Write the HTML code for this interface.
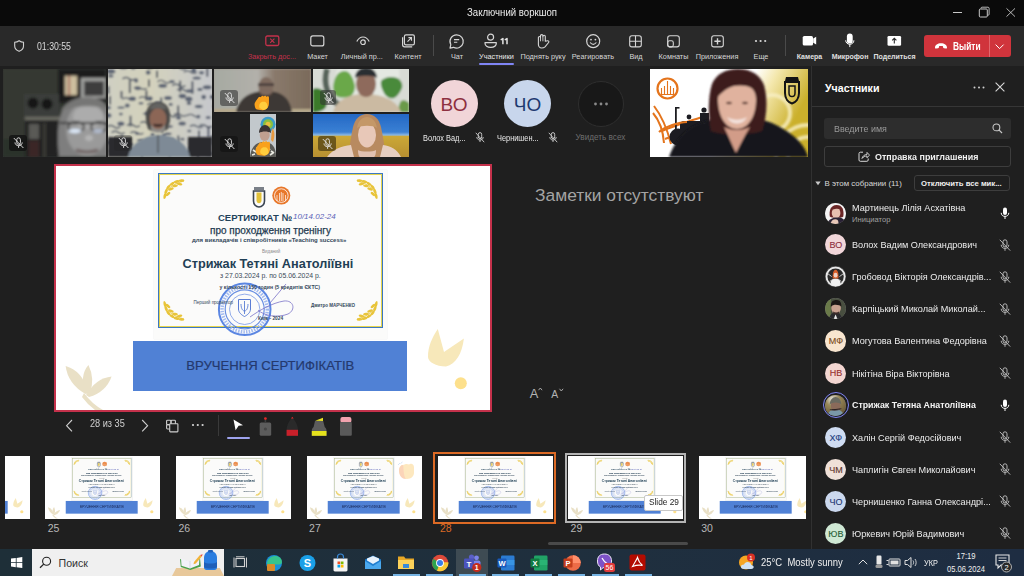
<!DOCTYPE html>
<html><head><meta charset="utf-8">
<style>
*{margin:0;padding:0;box-sizing:border-box}
html,body{width:1024px;height:576px;overflow:hidden;background:#1f1f1f;font-family:"Liberation Sans",sans-serif;color:#fff}
.a{position:absolute}
.t{position:absolute;white-space:nowrap;line-height:1}
.lbl{position:absolute;white-space:nowrap;line-height:1;font-size:7.3px;color:#d6d6d6;transform:translateX(-50%)}
svg{position:absolute;overflow:visible}
</style></head><body>
<!-- title bar -->
<div class="a" style="left:0;top:0;width:1024px;height:26px;background:#0a0a0a"></div>
<div class="t" style="left:467px;top:7.2px;font-size:10.7px;color:#ececec;transform-origin:0 0;transform:scaleX(0.9)">Заключний воркшоп</div>
<!-- window controls -->
<div class="a" style="left:953px;top:11.5px;width:8.7px;height:1px;background:#c8c8c8"></div>
<svg style="left:978px;top:6px" width="13" height="13"><path d="M3 2.6V2.2C3 1.6 3.5 1.2 4.1 1.2H10c0.6 0 1.1 0.5 1.1 1.1V8.2c0 0.6-0.4 1.1-1 1.1H9.6" fill="none" stroke="#c8c8c8" stroke-width="0.9"/><rect x="1.3" y="3" width="8" height="8" rx="1" fill="none" stroke="#c8c8c8" stroke-width="1"/></svg>
<svg style="left:1006px;top:8px" width="10" height="10"><path d="M0.5 0.4L9 8.6M9 0.4L0.5 8.6" stroke="#c8c8c8" stroke-width="0.9"/></svg>

<!-- toolbar -->
<div class="a" style="left:0;top:26px;width:1024px;height:40px;background:#292929"></div>

<!-- shield + time -->
<svg style="left:13.7px;top:40.2px" width="11" height="12"><path d="M5.1 0.7C3.7 1.7 2.3 2.2 0.7 2.3V5.9C0.7 8.4 2.3 10.2 5.1 11.3C7.9 10.2 9.5 8.4 9.5 5.9V2.3C7.9 2.2 6.5 1.7 5.1 0.7z" fill="none" stroke="#cfcfcf" stroke-width="1.1"/></svg>
<div class="t" style="left:37px;top:41.8px;font-size:10.4px;color:#d8d8d8;transform-origin:0 0;transform:scaleX(0.84)">01:30:55</div>

<!-- close share -->
<svg style="left:265px;top:35px" width="15" height="12"><rect x="0.8" y="1" width="13" height="9.5" rx="1.5" fill="none" stroke="#c4314b" stroke-width="1.3"/><path d="M5.2 3.7L9.4 7.9M9.4 3.7L5.2 7.9" stroke="#c4314b" stroke-width="1.1"/></svg>
<div class="lbl" style="left:272px;top:53px;color:#c4314b">Закрыть дос...</div>
<!-- layout -->
<svg style="left:310px;top:35px" width="15" height="12"><rect x="0.8" y="0.9" width="13" height="10" rx="2" fill="none" stroke="#d6d6d6" stroke-width="1.2"/></svg>
<div class="lbl" style="left:317.5px;top:53px">Макет</div>
<!-- personal view -->
<svg style="left:356px;top:36px" width="14" height="10"><path d="M0.8 5.5C2.5 2.3 4.6 1 7 1s4.5 1.3 6.2 4.5" fill="none" stroke="#d6d6d6" stroke-width="1.2"/><circle cx="7" cy="6.2" r="2.3" fill="none" stroke="#d6d6d6" stroke-width="1.2"/></svg>
<div class="lbl" style="left:361.8px;top:53px">Личный пр...</div>
<!-- content -->
<svg style="left:401px;top:34px" width="15" height="14"><rect x="3.4" y="0.8" width="10" height="10" rx="1.6" fill="none" stroke="#d6d6d6" stroke-width="1.2"/><path d="M1.6 3.2v7.6c0 1.2 0.9 2 2 2h7.6" fill="none" stroke="#d6d6d6" stroke-width="1.2"/><path d="M6.5 7.6L10.3 3.8M7.4 3.6h3.1v3.1" fill="none" stroke="#d6d6d6" stroke-width="1.1"/></svg>
<div class="lbl" style="left:408px;top:53px">Контент</div>
<div class="a" style="left:433px;top:35px;width:1px;height:21px;background:#4a4a4a"></div>
<!-- chat -->
<svg style="left:449px;top:34px" width="16" height="15"><path d="M7.6 0.9a6.6 6.6 0 1 1-3.1 12.4L1 14.1l0.8-3.4A6.6 6.6 0 0 1 7.6 0.9z" fill="none" stroke="#d6d6d6" stroke-width="1.2" stroke-linejoin="round"/><path d="M5 5.6h5.2M5 8.3h3.3" stroke="#d6d6d6" stroke-width="1.1"/></svg>
<div class="lbl" style="left:457px;top:53px">Чат</div>
<!-- participants -->
<svg style="left:484px;top:33px" width="14" height="16"><circle cx="6.6" cy="4.2" r="3" fill="none" stroke="#d6d6d6" stroke-width="1.2"/><path d="M1 9.6h11.3v0.6c0 2.6-2.4 4.2-5.65 4.2S1 12.8 1 10.2z" fill="none" stroke="#d6d6d6" stroke-width="1.2" stroke-linejoin="round"/></svg>
<svg style="left:499.5px;top:37.8px" width="9" height="7"><path d="M2.9 6.2V0.6L0.7 1.9M7 6.2V0.6L4.8 1.9" fill="none" stroke="#e4e4e4" stroke-width="1.5" stroke-linejoin="round"/></svg>
<div class="lbl" style="left:496.5px;top:53px;color:#e8e8e8">Участники</div>
<div class="a" style="left:479px;top:63px;width:35px;height:2px;background:#7f85f5;border-radius:1px"></div>
<!-- raise hand -->
<svg style="left:537px;top:33px" width="14" height="16"><path d="M1.4 11V4.6A1.05 1.05 0 0 1 3.5 4.6V2.8A1.2 1.2 0 0 1 5.9 2.8V3.5A1.2 1.2 0 0 1 8.3 3.5V8.3L10.5 7.8C11.6 7.6 12.3 8.7 11.6 9.5L8 13.8C7.1 14.7 5.8 15 4.6 15C2.7 15 1.4 13.5 1.4 11.5Z" fill="none" stroke="#d6d6d6" stroke-width="1.1" stroke-linejoin="round"/><path d="M3.5 4.6V8.3M5.9 3.5V8.3" stroke="#d6d6d6" stroke-width="0.9"/></svg>
<div class="lbl" style="left:543px;top:53px">Поднять руку</div>
<!-- react -->
<svg style="left:586px;top:34px" width="15" height="15"><circle cx="7.2" cy="7.2" r="6.5" fill="none" stroke="#d6d6d6" stroke-width="1.2"/><circle cx="5" cy="5.6" r="0.9" fill="#d6d6d6"/><circle cx="9.4" cy="5.6" r="0.9" fill="#d6d6d6"/><path d="M4.4 8.8c0.8 1.1 1.7 1.6 2.8 1.6s2-0.5 2.8-1.6" fill="none" stroke="#d6d6d6" stroke-width="1.1" stroke-linecap="round"/></svg>
<div class="lbl" style="left:593px;top:53px">Реагировать</div>
<!-- view -->
<svg style="left:629.4px;top:34.5px" width="14" height="13"><rect x="0.7" y="0.7" width="11.6" height="11.2" rx="2.2" fill="none" stroke="#d6d6d6" stroke-width="1.1"/><path d="M6.5 0.7v11.2M0.7 6.3h11.6" stroke="#d6d6d6" stroke-width="1.1"/></svg>
<div class="lbl" style="left:636px;top:53px">Вид</div>
<!-- rooms -->
<svg style="left:666.6px;top:34.5px" width="14" height="13"><rect x="0.7" y="0.7" width="11.6" height="11.2" rx="2.3" fill="none" stroke="#d6d6d6" stroke-width="1.1"/><rect x="0.7" y="5.7" width="5.6" height="6.2" rx="1.9" fill="none" stroke="#d6d6d6" stroke-width="1.1"/></svg>
<div class="lbl" style="left:673.5px;top:53px">Комнаты</div>
<!-- apps -->
<svg style="left:710.5px;top:34.5px" width="14" height="13"><rect x="0.7" y="0.7" width="11.6" height="11.2" rx="2.2" fill="none" stroke="#d6d6d6" stroke-width="1.1"/><path d="M6.5 3.2v6.2M3.4 6.3h6.2" stroke="#d6d6d6" stroke-width="1.4"/></svg>
<div class="lbl" style="left:717px;top:53px">Приложения</div>
<!-- more -->
<svg style="left:754px;top:39px" width="14" height="4"><circle cx="2" cy="2" r="1.1" fill="#d6d6d6"/><circle cx="6.6" cy="2" r="1.1" fill="#d6d6d6"/><circle cx="11.2" cy="2" r="1.1" fill="#d6d6d6"/></svg>
<div class="lbl" style="left:761px;top:53px">Еще</div>
<div class="a" style="left:785px;top:35px;width:1px;height:21px;background:#4a4a4a"></div>
<!-- camera -->
<svg style="left:802px;top:35px" width="15" height="11"><rect x="0.7" y="0.9" width="10.3" height="9.6" rx="1.6" fill="#fff"/><path d="M11.2 3.6L14.2 1.8v7.8l-3-1.8z" fill="#fff"/></svg>
<div class="lbl" style="left:809.5px;top:53px;font-weight:bold;font-size:7px;color:#e0e0e0">Камера</div>
<!-- mic -->
<svg style="left:845px;top:33px" width="10" height="15"><rect x="1.9" y="0.6" width="5.8" height="10" rx="2.9" fill="#fff"/><path d="M0.7 7.3c0 2.3 1.8 4 4.1 4s4.1-1.7 4.1-4M4.8 11.3v2.8" fill="none" stroke="#fff" stroke-width="1"/></svg>
<div class="lbl" style="left:850px;top:53px;font-weight:bold;font-size:7px;color:#e0e0e0">Микрофон</div>
<!-- share -->
<svg style="left:887px;top:35px" width="15" height="12"><rect x="0.5" y="0.9" width="13.6" height="9.9" rx="1.3" fill="#fff"/><path d="M7.3 8.6V3.4M5.2 5.4l2.1-2.1 2.1 2.1" fill="none" stroke="#292929" stroke-width="1.1"/></svg>
<div class="lbl" style="left:894.5px;top:53px;font-weight:bold;font-size:7px;color:#e0e0e0">Поделиться</div>
<!-- leave -->
<div class="a" style="left:924px;top:35px;width:87px;height:22px;background:#d0343c;border-radius:3px"></div>
<div class="a" style="left:989px;top:35px;width:1px;height:22px;background:#e0676d"></div>
<svg style="left:934px;top:42px" width="14" height="8"><path d="M1 5.4C1.1 3.1 3.6 1.2 7 1.2s5.9 1.9 6 4.2c0 0.8-0.5 1.3-1.1 1.2l-2-0.3c-0.6-0.1-0.9-0.6-0.9-1.2V4.2C8.3 3.8 5.7 3.8 5 4.2v0.9c0 0.6-0.3 1.1-0.9 1.2l-2 0.3C1.5 6.7 1 6.2 1 5.4z" fill="#fff"/></svg>
<div class="t" style="left:952.5px;top:42px;font-size:10.2px;font-weight:bold;color:#fff;transform-origin:0 0;transform:scaleX(0.82)">Выйти</div>
<svg style="left:995px;top:44px" width="10" height="6"><path d="M0.6 0.6L4.6 4.6 8.6 0.6" fill="none" stroke="#fff" stroke-width="1"/></svg>


<!-- VIDEO TILES -->
<svg style="left:0;top:0" width="1" height="1"><defs>
<filter id="b1" x="-20%" y="-20%" width="140%" height="140%"><feGaussianBlur stdDeviation="1.2"/></filter>
<filter id="b2" x="-20%" y="-20%" width="140%" height="140%"><feGaussianBlur stdDeviation="2.5"/></filter>
<filter id="b15" x="-20%" y="-20%" width="140%" height="140%"><feGaussianBlur stdDeviation="1.6"/></filter>
<filter id="b05" x="-20%" y="-20%" width="140%" height="140%"><feGaussianBlur stdDeviation="0.6"/></filter>
</defs></svg>
<!-- tile 1 -->
<div class="a" style="left:3px;top:69px;width:103px;height:88px;overflow:hidden;background:#2e332f">
<svg style="left:0;top:0" width="103" height="88"><g filter="url(#b15)">
 <rect x="0" y="0" width="103" height="88" fill="#2c312c"/>
 <rect x="0" y="0" width="58" height="70" fill="#343933"/>
 <rect x="55" y="0" width="48" height="34" fill="#1c1d1b"/>
 <rect x="62" y="7" width="12" height="19" fill="#cdbf9f"/>
 <rect x="65" y="7" width="2" height="19" fill="#8a2a2a" opacity="0.6"/>
 <rect x="78" y="9" width="25" height="20" fill="#a2a3a0"/>
 <rect x="81" y="12" width="20" height="15" fill="#3c3e3c"/>
 <rect x="21" y="25" width="35" height="23" fill="#3a3c3a"/>
 <circle cx="30" cy="34" r="5.5" fill="#151615"/>
 <circle cx="44" cy="35" r="5.5" fill="#151615"/>
 <rect x="22" y="48" width="36" height="3" fill="#6e6e66"/>
 <rect x="22" y="51" width="36" height="37" fill="#242422"/>
 <rect x="26" y="55" width="10" height="15" fill="#5a5a56"/>
 <rect x="26" y="72" width="10" height="16" fill="#3a2826"/>
 <rect x="40" y="54" width="3" height="34" fill="#3a3a36"/>
 <path d="M56 88C54 70 54 52 60 40C66 31 74 28 84 28C96 28 104 34 106 42V88z" fill="#7e7e7e"/>
 <ellipse cx="84" cy="60" rx="21" ry="27" fill="#9a9a9a"/>
 <ellipse cx="85" cy="48" rx="15" ry="12" fill="#acacac"/>
 <path d="M58 42C62 33 72 29 84 29C95 29 102 34 105 40C96 36 70 36 58 42z" fill="#767674"/>
 <path d="M57 54h48" stroke="#2e2e2e" stroke-width="2.2"/>
 <ellipse cx="73" cy="58" rx="8" ry="5" fill="none" stroke="#333" stroke-width="1.8"/>
 <ellipse cx="96" cy="58" rx="8" ry="5" fill="none" stroke="#333" stroke-width="1.8"/>
 <ellipse cx="72" cy="62" rx="6.5" ry="2.2" fill="#dce8f8"/>
 <ellipse cx="95" cy="62" rx="5" ry="2" fill="#b0bacc"/>
 <ellipse cx="86" cy="69" rx="4" ry="3" fill="#b4b4b4"/>
 <path d="M73 81c6 2.5 16 2.5 22 0" stroke="#6e6262" stroke-width="3" fill="none"/>
</g></svg>
<div class="a" style="left:6px;top:66px;width:18px;height:16px;border-radius:3px;background:rgba(18,18,18,0.8)"></div><svg style="left:9.5px;top:68.0px" width="11" height="12"><rect x="3.8" y="0.8" width="3.6" height="6.6" rx="1.8" fill="none" stroke="#e8e8e8" stroke-width="0.9"/><path d="M2 5.4c0 2 1.6 3.3 3.6 3.3s3.6-1.3 3.6-3.3M5.6 8.7v2.2" fill="none" stroke="#e8e8e8" stroke-width="0.9"/><path d="M0.8 1L10.4 11" stroke="#e8e8e8" stroke-width="0.9"/></svg>
</div>
<!-- tile 2 -->
<div class="a" style="left:108px;top:69px;width:104px;height:88px;overflow:hidden;background:#c8c8c0">
<svg style="left:0;top:0" width="104" height="88"><defs><linearGradient id="wp" x1="0" y1="0" x2="1" y2="0"><stop offset="0" stop-color="#cfcfc2"/><stop offset="0.4" stop-color="#d4d2bc"/><stop offset="1" stop-color="#c6c8cc"/></linearGradient></defs>
<g filter="url(#b1)">
 <rect x="0" y="0" width="104" height="88" fill="url(#wp)"/>
<ellipse cx="3.0" cy="2.5" rx="4.4" ry="2.2" fill="#5a6272"/>
<ellipse cx="15.4" cy="-1.8" rx="4.4" ry="2.0" fill="#5a6272"/>
<ellipse cx="25.2" cy="-1.3" rx="2.6" ry="1.9" fill="#5a6272"/>
<path d="M32.6 -1.9c2 -1.5 5 -1.5 7 0s4 1.5 6 0" fill="none" stroke="#4a5262" stroke-width="1.4"/>
<ellipse cx="40.2" cy="3.5" rx="2.4" ry="2.2" fill="#5a6272"/>
<path d="M49.1 1.7v7.0" stroke="#3a4254" stroke-width="1.8"/>
<path d="M65.0 -0.7c2 -1.5 5 -1.5 7 0s4 1.5 6 0" fill="none" stroke="#4a5262" stroke-width="1.4"/>
<path d="M75.9 3.2c2 -1.5 5 -1.5 7 0s4 1.5 6 0" fill="none" stroke="#4a5262" stroke-width="1.4"/>
<ellipse cx="85.7" cy="1.2" rx="2.5" ry="2.4" fill="#5a6272"/>
<ellipse cx="93.5" cy="3.8" rx="2.7" ry="1.7" fill="#5a6272"/>
<path d="M99.3 -1.1v8.8" stroke="#3a4254" stroke-width="1.8"/>
<ellipse cx="2.8" cy="7.0" rx="2.8" ry="1.6" fill="#5a6272"/>
<path d="M14.5 9.9c2 -1.5 5 -1.5 7 0s4 1.5 6 0" fill="none" stroke="#4a5262" stroke-width="1.4"/>
<path d="M21.8 11.2v12.9" stroke="#3a4254" stroke-width="1.8"/>
<ellipse cx="28.2" cy="11.5" rx="2.0" ry="2.2" fill="#5a6272"/>
<path d="M40.9 10.5v7.3" stroke="#3a4254" stroke-width="1.8"/>
<path d="M49.4 12.7c2 -1.5 5 -1.5 7 0s4 1.5 6 0" fill="none" stroke="#4a5262" stroke-width="1.4"/>
<ellipse cx="64.0" cy="12.6" rx="2.9" ry="1.7" fill="#5a6272"/>
<path d="M72.2 11.7v11.5" stroke="#3a4254" stroke-width="1.8"/>
<path d="M84.4 12.2v12.7" stroke="#3a4254" stroke-width="1.8"/>
<ellipse cx="88.7" cy="9.0" rx="4.3" ry="1.6" fill="#5a6272"/>
<path d="M105.4 10.3c2 -1.5 5 -1.5 7 0s4 1.5 6 0" fill="none" stroke="#4a5262" stroke-width="1.4"/>
<path d="M0.5 17.1v7.9" stroke="#3a4254" stroke-width="1.8"/>
<path d="M13.5 22.0v7.3" stroke="#3a4254" stroke-width="1.8"/>
<path d="M25.9 19.2c2 -1.5 5 -1.5 7 0s4 1.5 6 0" fill="none" stroke="#4a5262" stroke-width="1.4"/>
<ellipse cx="29.9" cy="19.6" rx="3.1" ry="1.7" fill="#5a6272"/>
<path d="M38.4 21.5v10.0" stroke="#3a4254" stroke-width="1.8"/>
<ellipse cx="54.7" cy="16.8" rx="4.4" ry="2.0" fill="#5a6272"/>
<path d="M64.3 16.6c2 -1.5 5 -1.5 7 0s4 1.5 6 0" fill="none" stroke="#4a5262" stroke-width="1.4"/>
<path d="M69.2 21.1c2 -1.5 5 -1.5 7 0s4 1.5 6 0" fill="none" stroke="#4a5262" stroke-width="1.4"/>
<ellipse cx="81.6" cy="22.0" rx="4.4" ry="1.8" fill="#5a6272"/>
<ellipse cx="91.9" cy="20.4" rx="2.7" ry="1.7" fill="#5a6272"/>
<ellipse cx="99.2" cy="18.3" rx="4.4" ry="2.0" fill="#5a6272"/>
<path d="M2.0 27.0v8.6" stroke="#3a4254" stroke-width="1.8"/>
<path d="M14.3 30.2c2 -1.5 5 -1.5 7 0s4 1.5 6 0" fill="none" stroke="#4a5262" stroke-width="1.4"/>
<ellipse cx="24.3" cy="29.6" rx="3.7" ry="2.2" fill="#5a6272"/>
<path d="M30.9 29.2c2 -1.5 5 -1.5 7 0s4 1.5 6 0" fill="none" stroke="#4a5262" stroke-width="1.4"/>
<ellipse cx="41.9" cy="29.6" rx="2.7" ry="2.4" fill="#5a6272"/>
<path d="M53.2 28.5v10.3" stroke="#3a4254" stroke-width="1.8"/>
<ellipse cx="60.0" cy="29.0" rx="4.0" ry="2.0" fill="#5a6272"/>
<ellipse cx="74.4" cy="27.1" rx="3.8" ry="2.3" fill="#5a6272"/>
<ellipse cx="80.8" cy="30.1" rx="3.7" ry="2.5" fill="#5a6272"/>
<ellipse cx="95.7" cy="28.1" rx="2.4" ry="2.3" fill="#5a6272"/>
<ellipse cx="105.5" cy="27.9" rx="3.8" ry="2.1" fill="#5a6272"/>
<ellipse cx="-0.6" cy="38.7" rx="3.7" ry="1.7" fill="#5a6272"/>
<ellipse cx="13.0" cy="38.6" rx="3.8" ry="1.2" fill="#5a6272"/>
<ellipse cx="19.3" cy="36.6" rx="2.5" ry="2.1" fill="#5a6272"/>
<ellipse cx="33.0" cy="34.3" rx="2.6" ry="1.3" fill="#5a6272"/>
<path d="M39.1 35.9c2 -1.5 5 -1.5 7 0s4 1.5 6 0" fill="none" stroke="#4a5262" stroke-width="1.4"/>
<ellipse cx="49.5" cy="34.2" rx="3.0" ry="2.0" fill="#5a6272"/>
<ellipse cx="62.7" cy="35.4" rx="2.0" ry="1.7" fill="#5a6272"/>
<path d="M70.2 36.5v12.0" stroke="#3a4254" stroke-width="1.8"/>
<ellipse cx="81.0" cy="34.2" rx="2.2" ry="1.9" fill="#5a6272"/>
<ellipse cx="90.7" cy="37.5" rx="4.0" ry="1.7" fill="#5a6272"/>
<path d="M104.5 37.9c2 -1.5 5 -1.5 7 0s4 1.5 6 0" fill="none" stroke="#4a5262" stroke-width="1.4"/>
<ellipse cx="-0.9" cy="46.6" rx="4.4" ry="2.5" fill="#5a6272"/>
<ellipse cx="12.9" cy="45.1" rx="2.0" ry="1.3" fill="#5a6272"/>
<path d="M22.5 46.7v10.8" stroke="#3a4254" stroke-width="1.8"/>
<path d="M35.1 45.3c2 -1.5 5 -1.5 7 0s4 1.5 6 0" fill="none" stroke="#4a5262" stroke-width="1.4"/>
<ellipse cx="39.8" cy="44.7" rx="2.9" ry="2.4" fill="#5a6272"/>
<path d="M55.3 46.6c2 -1.5 5 -1.5 7 0s4 1.5 6 0" fill="none" stroke="#4a5262" stroke-width="1.4"/>
<path d="M65.8 46.0c2 -1.5 5 -1.5 7 0s4 1.5 6 0" fill="none" stroke="#4a5262" stroke-width="1.4"/>
<ellipse cx="70.6" cy="48.9" rx="2.7" ry="1.8" fill="#5a6272"/>
<path d="M79.0 46.7c2 -1.5 5 -1.5 7 0s4 1.5 6 0" fill="none" stroke="#4a5262" stroke-width="1.4"/>
<ellipse cx="90.3" cy="47.7" rx="2.0" ry="1.9" fill="#5a6272"/>
<ellipse cx="100.2" cy="48.6" rx="2.6" ry="1.5" fill="#5a6272"/>
<path d="M-0.8 57.9c2 -1.5 5 -1.5 7 0s4 1.5 6 0" fill="none" stroke="#4a5262" stroke-width="1.4"/>
<ellipse cx="12.9" cy="54.8" rx="3.5" ry="2.2" fill="#5a6272"/>
<path d="M18.9 56.6c2 -1.5 5 -1.5 7 0s4 1.5 6 0" fill="none" stroke="#4a5262" stroke-width="1.4"/>
<path d="M32.3 54.0c2 -1.5 5 -1.5 7 0s4 1.5 6 0" fill="none" stroke="#4a5262" stroke-width="1.4"/>
<path d="M42.2 54.8c2 -1.5 5 -1.5 7 0s4 1.5 6 0" fill="none" stroke="#4a5262" stroke-width="1.4"/>
<path d="M54.0 55.5v8.5" stroke="#3a4254" stroke-width="1.8"/>
<ellipse cx="61.6" cy="57.5" rx="3.4" ry="1.2" fill="#5a6272"/>
<ellipse cx="74.2" cy="54.6" rx="3.8" ry="2.0" fill="#5a6272"/>
<path d="M81.9 57.5c2 -1.5 5 -1.5 7 0s4 1.5 6 0" fill="none" stroke="#4a5262" stroke-width="1.4"/>
<path d="M91.1 57.1c2 -1.5 5 -1.5 7 0s4 1.5 6 0" fill="none" stroke="#4a5262" stroke-width="1.4"/>
<path d="M100.4 57.0v12.0" stroke="#3a4254" stroke-width="1.8"/>
<path d="M3.6 63.6c2 -1.5 5 -1.5 7 0s4 1.5 6 0" fill="none" stroke="#4a5262" stroke-width="1.4"/>
<path d="M14.2 66.5v9.9" stroke="#3a4254" stroke-width="1.8"/>
<path d="M22.4 64.0c2 -1.5 5 -1.5 7 0s4 1.5 6 0" fill="none" stroke="#4a5262" stroke-width="1.4"/>
<ellipse cx="29.2" cy="64.5" rx="2.2" ry="1.5" fill="#5a6272"/>
<ellipse cx="44.6" cy="65.8" rx="2.1" ry="2.1" fill="#5a6272"/>
<ellipse cx="55.8" cy="67.0" rx="2.1" ry="2.3" fill="#5a6272"/>
<ellipse cx="59.8" cy="64.9" rx="3.8" ry="1.4" fill="#5a6272"/>
<path d="M70.3 66.5v10.7" stroke="#3a4254" stroke-width="1.8"/>
<ellipse cx="81.3" cy="62.0" rx="2.1" ry="1.3" fill="#5a6272"/>
<path d="M91.0 61.4v10.5" stroke="#3a4254" stroke-width="1.8"/>
<path d="M103.9 66.3v9.6" stroke="#3a4254" stroke-width="1.8"/>
<ellipse cx="0.5" cy="73.6" rx="4.3" ry="1.7" fill="#5a6272"/>
<path d="M8.4 74.2v10.8" stroke="#3a4254" stroke-width="1.8"/>
<ellipse cx="22.0" cy="75.5" rx="3.6" ry="1.5" fill="#5a6272"/>
<ellipse cx="32.4" cy="71.5" rx="3.3" ry="1.4" fill="#5a6272"/>
<ellipse cx="39.9" cy="72.2" rx="2.4" ry="2.1" fill="#5a6272"/>
<ellipse cx="53.2" cy="70.5" rx="2.2" ry="1.4" fill="#5a6272"/>
<ellipse cx="62.8" cy="71.4" rx="3.2" ry="1.6" fill="#5a6272"/>
<ellipse cx="74.4" cy="70.2" rx="2.1" ry="1.4" fill="#5a6272"/>
<path d="M85.6 74.1c2 -1.5 5 -1.5 7 0s4 1.5 6 0" fill="none" stroke="#4a5262" stroke-width="1.4"/>
<ellipse cx="88.9" cy="75.8" rx="4.1" ry="1.4" fill="#5a6272"/>
<path d="M103.0 72.1c2 -1.5 5 -1.5 7 0s4 1.5 6 0" fill="none" stroke="#4a5262" stroke-width="1.4"/>
<path d="M0.7 82.7c2 -1.5 5 -1.5 7 0s4 1.5 6 0" fill="none" stroke="#4a5262" stroke-width="1.4"/>
<ellipse cx="11.1" cy="79.8" rx="3.6" ry="2.2" fill="#5a6272"/>
<ellipse cx="21.5" cy="84.1" rx="3.5" ry="1.9" fill="#5a6272"/>
<path d="M33.9 81.4v7.2" stroke="#3a4254" stroke-width="1.8"/>
<ellipse cx="39.6" cy="79.2" rx="3.2" ry="2.2" fill="#5a6272"/>
<ellipse cx="48.0" cy="81.8" rx="3.5" ry="1.8" fill="#5a6272"/>
<path d="M61.7 79.6v8.0" stroke="#3a4254" stroke-width="1.8"/>
<ellipse cx="71.0" cy="81.3" rx="2.4" ry="1.5" fill="#5a6272"/>
<path d="M80.2 80.0c2 -1.5 5 -1.5 7 0s4 1.5 6 0" fill="none" stroke="#4a5262" stroke-width="1.4"/>
<path d="M89.9 81.9v12.5" stroke="#3a4254" stroke-width="1.8"/>
<ellipse cx="101.0" cy="84.6" rx="3.7" ry="1.8" fill="#5a6272"/>
</g><g filter="url(#b1)">
 <path d="M0 68h24v20H0zM80 68h24v20H80z" fill="#2c2c2e"/>
 <path d="M20 88c2-12 14-21 30-22s30 9 32 22z" fill="#7e8a96"/>
 <path d="M38 52c-1-12 3-19 12-19s13 7 12 19l-2 8c-5 4-15 4-20 0z" fill="#4a4846"/>
 <ellipse cx="50" cy="50" rx="8.5" ry="11" fill="#8c6656"/>
 <path d="M43 55c2 7 12 7 14 0v5c-3 5-11 5-14 0z" fill="#8e8c88"/>
 <path d="M45.5 55.5c2.5 1.5 6.5 1.5 9 0" stroke="#2e2424" stroke-width="2"/>
 <path d="M41 41c2-5 5-7 9-7s7 2 9 7c-4-2-14-2-18 0z" fill="#646462"/>
 <path d="M50 66v18" stroke="#3a3a3a" stroke-width="1"/>
</g></svg>
<div class="a" style="left:6px;top:66px;width:18px;height:16px;border-radius:3px;background:rgba(30,30,30,0.25)"></div><svg style="left:9.5px;top:68.0px" width="11" height="12"><rect x="3.8" y="0.8" width="3.6" height="6.6" rx="1.8" fill="none" stroke="#e8e8e8" stroke-width="0.9"/><path d="M2 5.4c0 2 1.6 3.3 3.6 3.3s3.6-1.3 3.6-3.3M5.6 8.7v2.2" fill="none" stroke="#e8e8e8" stroke-width="0.9"/><path d="M0.8 1L10.4 11" stroke="#e8e8e8" stroke-width="0.9"/></svg>
</div>
<!-- tile 3 -->
<div class="a" style="left:214px;top:69px;width:97px;height:43px;overflow:hidden;background:#a09890">
<svg style="left:0;top:0" width="97" height="43"><defs><linearGradient id="t3" x1="0" y1="0" x2="1" y2="0"><stop offset="0" stop-color="#a6aaa2"/><stop offset="0.45" stop-color="#b2b0aa"/><stop offset="0.62" stop-color="#8a7a6c"/><stop offset="1" stop-color="#7a6a5a"/></linearGradient></defs><g filter="url(#b1)">
 <rect x="0" y="0" width="97" height="43" fill="url(#t3)"/>
 <rect x="0" y="40" width="97" height="3" fill="#b8aa8a"/>
 <path d="M22 43c2-12 12-21 30-21s24 9 26 21z" fill="#3c3834"/>
 <ellipse cx="52" cy="18" rx="7.5" ry="10" fill="#7e6a5e"/>
 <rect x="44" y="14.5" width="16" height="2.2" fill="#3e3434"/>
 <path d="M46 24c3 3 9 3 12 0v2c-3 3-9 3-12 0z" fill="#4a3e38"/>
</g>
<g filter="url(#b05)" transform="translate(5 4) scale(0.9)"><path d="M41 40c-2-3-2-7 0-9l3-4c1-1 2-1 2 0l1-1c1-1 2-1 2.5 0l1-0.5c1-0.5 2 0 2 1l1-0.5c1-0.3 2 0.3 2 1.3v6c0 4-2 8-7 8-3.5 0-6-0.5-7.5-1.3z" fill="#f9a11b"/><path d="M45 39c-1-3 0-6 3-7l3 0c2 1 3 3 3 6-1 2-3 3-5 3z" fill="#ffcd3c"/></g>
</svg>
<div class="a" style="left:6px;top:21px;width:18px;height:16px;border-radius:3px;background:rgba(70,70,70,0.7)"></div><svg style="left:9.5px;top:23.0px" width="11" height="12"><rect x="3.8" y="0.8" width="3.6" height="6.6" rx="1.8" fill="none" stroke="#e8e8e8" stroke-width="0.9"/><path d="M2 5.4c0 2 1.6 3.3 3.6 3.3s3.6-1.3 3.6-3.3M5.6 8.7v2.2" fill="none" stroke="#e8e8e8" stroke-width="0.9"/><path d="M0.8 1L10.4 11" stroke="#e8e8e8" stroke-width="0.9"/></svg>
</div>
<!-- tile 3b -->
<div class="a" style="left:214px;top:114px;width:97px;height:43px;overflow:hidden;background:#202020">
<svg style="left:35.5px;top:0" width="26" height="43"><g filter="url(#b05)">
 <rect x="0" y="0" width="26" height="43" fill="#c2c8cc"/>
 <circle cx="18" cy="10.3" r="7.5" fill="#3a9cc8"/>
 <circle cx="18" cy="10.3" r="5" fill="#8ac040"/>
 <circle cx="18" cy="10.3" r="2.5" fill="#e8c040"/>
 <path d="M22 14c3 3 3 8 1 14l-2-2z" fill="#e89a40"/>
 <ellipse cx="14.7" cy="21" rx="5" ry="6" fill="#c0a090"/>
 <path d="M9 19c0-5 3-8 6-8s6 3 6 8c-3-2-9-2-12 0z" fill="#3a3434"/>
 <path d="M0 43c1-10 6-15 14-15s12 5 12 15z" fill="#5a5a56"/>
 <path d="M3 36l3 2M7 33l2 4M18 33l2 3M21 37l3 2M2 41l3-1M20 41l3-2" stroke="#eaeae2" stroke-width="1.6"/>
 <g transform="translate(1.5 4.5) scale(0.9)"><path d="M6 40c-2-3-2-7 0-9l3-4c1-1 2-1 2 0l1-1c1-1 2-1 2.5 0l1-0.5c1-0.5 2 0 2 1l1-0.5c1-0.3 2 0.3 2 1.3v6c0 4-2 8-7 8-3.5 0-6-0.5-7.5-1.3z" fill="#f9a11b"/>
 <path d="M10 39c-1-3 0-6 3-7l3 0c2 1 3 3 3 6-1 2-3 3-5 3z" fill="#ffcd3c"/></g>
</g></svg>
<div class="a" style="left:6px;top:22px;width:18px;height:16px;border-radius:3px;background:rgba(22,22,22,0.95)"></div><svg style="left:9.5px;top:24.0px" width="11" height="12"><rect x="3.8" y="0.8" width="3.6" height="6.6" rx="1.8" fill="none" stroke="#e8e8e8" stroke-width="0.9"/><path d="M2 5.4c0 2 1.6 3.3 3.6 3.3s3.6-1.3 3.6-3.3M5.6 8.7v2.2" fill="none" stroke="#e8e8e8" stroke-width="0.9"/><path d="M0.8 1L10.4 11" stroke="#e8e8e8" stroke-width="0.9"/></svg>
</div>
<!-- tile 4 -->
<div class="a" style="left:313px;top:69px;width:96px;height:43px;overflow:hidden;background:#d8dcd6">
<svg style="left:0;top:0" width="96" height="43"><g filter="url(#b1)">
 <rect x="0" y="0" width="96" height="43" fill="#d8dbd5"/>
 <path d="M14 0C10 14 14 28 26 36" fill="none" stroke="#56645a" stroke-width="6"/>
 <path d="M24 0C20 12 24 24 34 30L70 32C82 26 88 14 86 0z" fill="#e4e8e2"/>
 <path d="M0 20c4-2 8 0 11 2 3 4 4 10 2 16-2 4-8 5-13 5z" fill="#3a7a2c"/>
 <path d="M22 26c-3-6-2-14 2-20 3-4 8-5 11-3 4 3 6 9 7 14 0 5-2 9-6 11-5 1-11 1-14-2z" fill="#6aa84a"/>
 <path d="M68 12c4-4 10-5 16-3 4 2 6 6 5 10-2 4-4 8-8 10-4 1-8-1-10-5-2-4-4-8-3-12z" fill="#4a8a3a"/>
 <path d="M88 32c3-2 6 0 8 2v9h-10c-1-4 0-8 2-11z" fill="#6a9a48"/>
 <path d="M20 43c3-11 14-18 32-18s32 7 36 18z" fill="#cbbaa2"/>
 <ellipse cx="53" cy="15" rx="10" ry="13" fill="#8e6a5c"/>
 <path d="M42 9c0-6 4-10 11-10s11 4 11 10c-5-3-17-3-22 0z" fill="#2a2e32"/>
</g></svg>
<div class="a" style="left:7px;top:21px;width:16px;height:15px;border-radius:3px;background:rgba(50,50,50,0.55)"></div><svg style="left:9.5px;top:22.5px" width="11" height="12"><rect x="3.8" y="0.8" width="3.6" height="6.6" rx="1.8" fill="none" stroke="#e8e8e8" stroke-width="0.9"/><path d="M2 5.4c0 2 1.6 3.3 3.6 3.3s3.6-1.3 3.6-3.3M5.6 8.7v2.2" fill="none" stroke="#e8e8e8" stroke-width="0.9"/><path d="M0.8 1L10.4 11" stroke="#e8e8e8" stroke-width="0.9"/></svg>
</div>
<!-- tile 4b -->
<div class="a" style="left:313px;top:114px;width:96px;height:43px;overflow:hidden;background:#3a7ad0">
<svg style="left:0;top:0" width="96" height="43"><defs><linearGradient id="sky" x1="0" y1="0" x2="0" y2="1"><stop offset="0" stop-color="#2468c4"/><stop offset="0.42" stop-color="#3a80d4"/><stop offset="0.49" stop-color="#8ab8e4"/><stop offset="0.52" stop-color="#cba838"/><stop offset="1" stop-color="#b89030"/></linearGradient></defs><g filter="url(#b05)">
 <rect x="0" y="0" width="96" height="43" fill="url(#sky)"/>
 <path d="M36 43c0-10 2-20 4-30 2-8 7-13 14-13s12 5 14 13c2 10 4 20 4 30z" fill="#b88a60"/>
 <path d="M14 43c6-8 14-11 24-12l3 12zM67 43l3-12c8 1 14 4 18 12z" fill="#e6cec0"/>
 <ellipse cx="54" cy="21" rx="9" ry="12.5" fill="#e8c8b8"/>
 <path d="M44 14c1-7 5-11 10-11s9 4 10 11c-4-3-16-3-20 0z" fill="#c49868"/>
 <path d="M45 36c0 4 1 7 2 7h14c1 0 2-3 2-7-3 2-15 2-18 0z" fill="#e0c0b0"/>
</g></svg>
<div class="a" style="left:5px;top:22px;width:18px;height:15px;border-radius:3px;background:rgba(70,55,15,0.7)"></div><svg style="left:8.5px;top:23.5px" width="11" height="12"><rect x="3.8" y="0.8" width="3.6" height="6.6" rx="1.8" fill="none" stroke="#e8e8e8" stroke-width="0.9"/><path d="M2 5.4c0 2 1.6 3.3 3.6 3.3s3.6-1.3 3.6-3.3M5.6 8.7v2.2" fill="none" stroke="#e8e8e8" stroke-width="0.9"/><path d="M0.8 1L10.4 11" stroke="#e8e8e8" stroke-width="0.9"/></svg>
</div>

<!-- avatars big -->
<div class="a" style="left:430.6px;top:80.2px;width:47px;height:47px;border-radius:50%;background:#f1d5d8"></div>
<div class="t" style="left:454px;top:95px;font-size:19px;color:#8e3040;transform:translateX(-50%)">ВО</div>
<div class="t" style="left:423px;top:133.8px;font-size:8.6px;color:#e8e8e8;transform-origin:0 0;transform:scaleX(0.86)">Волох Вад...</div>
<svg style="left:474.5px;top:132px" width="10" height="11"><rect x="3.3" y="0.6" width="3.4" height="6" rx="1.7" fill="none" stroke="#d0d0d0" stroke-width="0.9"/><path d="M1.8 5c0 1.8 1.4 3 3.2 3s3.2-1.2 3.2-3M5 8v2" fill="none" stroke="#d0d0d0" stroke-width="0.9"/><path d="M0.8 0.8L9.2 10.2" stroke="#d0d0d0" stroke-width="0.9"/></svg>
<div class="a" style="left:504px;top:80.2px;width:47px;height:47px;border-radius:50%;background:#c8d6ec"></div>
<div class="t" style="left:527.5px;top:95px;font-size:19px;color:#1f3a70;transform:translateX(-50%)">ЧО</div>
<div class="t" style="left:497px;top:133.8px;font-size:8.6px;color:#e8e8e8;transform-origin:0 0;transform:scaleX(0.86)">Чернишен...</div>
<svg style="left:548px;top:132px" width="10" height="11"><rect x="3.3" y="0.6" width="3.4" height="6" rx="1.7" fill="none" stroke="#d0d0d0" stroke-width="0.9"/><path d="M1.8 5c0 1.8 1.4 3 3.2 3s3.2-1.2 3.2-3M5 8v2" fill="none" stroke="#d0d0d0" stroke-width="0.9"/><path d="M0.8 0.8L9.2 10.2" stroke="#d0d0d0" stroke-width="0.9"/></svg>
<div class="a" style="left:578px;top:80.6px;width:46px;height:46px;border-radius:50%;background:#181818;border:1px solid #2e2e2e"></div>
<svg style="left:593px;top:102px" width="16" height="4"><circle cx="2.5" cy="2" r="1.4" fill="#8a8a8a"/><circle cx="8" cy="2" r="1.4" fill="#8a8a8a"/><circle cx="13.5" cy="2" r="1.4" fill="#8a8a8a"/></svg>
<div class="t" style="left:600.5px;top:133.5px;font-size:8.2px;color:#6e6e6e;transform:translateX(-50%)">Увидеть всех</div>

<!-- woman tile -->
<div class="a" style="left:650px;top:69px;width:158px;height:88px;overflow:hidden;background:#fff">
<svg style="left:0;top:0" width="158" height="88"><defs>
<linearGradient id="gold" x1="0" y1="0" x2="1" y2="0.3"><stop offset="0" stop-color="#fff"/><stop offset="0.62" stop-color="#fff"/><stop offset="0.75" stop-color="#f4e8ae"/><stop offset="1" stop-color="#cbb02c"/></linearGradient>
</defs>
 <rect x="0" y="0" width="158" height="88" fill="url(#gold)"/>
 <g filter="url(#b1)" fill="none" stroke="#f8efc4" stroke-width="4" opacity="0.8"><circle cx="158" cy="88" r="20"/><circle cx="158" cy="88" r="32"/><circle cx="122" cy="44" r="18"/></g>
 <circle cx="17.5" cy="19.5" r="10" fill="none" stroke="#e4741c" stroke-width="2.2"/>
 <path d="M11.5 25v-6M14.5 26v-9M17.5 26V12M20.5 26v-9M23.5 25v-6M11 25.5h13" stroke="#e4741c" stroke-width="1.1" fill="none"/>
 <g filter="url(#b05)">
 <g fill="none" stroke="#e4741c" stroke-width="2"><path d="M4 37c7 9 13 22 17 38"/><path d="M3 44c6 7 10 17 11 30"/><path d="M12 62c8-4 22-8 40-14"/><path d="M15 70c6-2 14-4 22-8"/></g>
 <g fill="#1e1e22"><circle cx="28" cy="68" r="8.5"/><rect x="30" y="52" width="24" height="15" rx="4"/><circle cx="39" cy="48" r="2.4"/><circle cx="54" cy="41" r="2.6"/><rect x="50" y="44" width="9" height="10"/><rect x="25" y="38" width="1.8" height="22"/><rect x="25" y="38" width="4.5" height="1.6"/></g>
 <path d="M9 63c6-5 20-10 28-10" stroke="#e4741c" stroke-width="2.2" fill="none"/>
 </g>
 <g filter="url(#b1)">
 <path d="M19 88C24 74 32 64 42 58C50 54 58 50 66 50L108 50C120 52 132 58 142 66C150 72 156 80 158 88z" fill="#17171d"/>
 <path d="M61 62C58 46 58 28 62 15C66 5 76 0 88 0C101 0 110 6 114 16C118 30 117 48 112 62C100 66 73 67 61 62z" fill="#3e1e1e"/>
 <path d="M68 30C68 20 76 14 87 14C98 14 106 20 106 30C106 48 98 60 87 60C76 60 68 48 68 30z" fill="#e0b29e"/>
 <path d="M64 32C66 14 76 5 90 5C102 5 110 13 112 26C104 18 94 15 84 17C76 19 70 25 64 32z" fill="#3e1e1e"/>
 <path d="M77 48c6 3.5 14 3.5 20 0c-2 4.5-6 6.5-10 6.5s-8-2-10-6.5z" fill="#f3e2dc"/>
 <path d="M74 58C78 66 82 76 86 84C90 76 95 66 100 58C92 62 82 62 74 58z" fill="#d29c88"/>
 <ellipse cx="79" cy="34" rx="3" ry="1.2" fill="#5a3a34"/><ellipse cx="95" cy="34" rx="3" ry="1.2" fill="#5a3a34"/>
 </g>
 <path d="M135 13h14v11c0 6-3.5 9.5-7 10.5-3.5-1-7-4.5-7-10.5z" fill="none" stroke="#141414" stroke-width="2"/>
 <path d="M139 17h6v7c0 2.2-1.3 3.6-3 3.6s-3-1.4-3-3.6z" fill="none" stroke="#141414" stroke-width="1.5"/>
 <path d="M136 8h12l1 4h-14z" fill="#141414"/>
</svg>
</div>

<!-- SLIDE -->
<div class="a" style="left:54px;top:164px;width:438px;height:248px;background:#fff;overflow:hidden">
<!-- decorations -->
<svg style="left:2px;top:2px" width="434" height="244">
 <g fill="#e9e0c6">
 <path d="M29.5 228Q12 218 9.6 200Q26 205 31 223Z"/>
 <path d="M29.5 228Q23 210 32.4 199Q39 212 34 227Z"/>
 <path d="M30 229Q40 212 55.6 210.4Q50 226 33 231Z"/>
 <path d="M28 227Q36 238 47 244L39 244Q31 238 26 231Z"/>
 </g>
 <path d="M381.8 163L388 185.9L407.9 172.6C406 188 400 198 390 200.6C380 200 372 196 372 190.9C372 180 376 172 381.8 163Z" fill="#f7e8ba"/>
 <circle cx="404.8" cy="217.2" r="6" fill="#fde08c"/>
</svg>
<!-- certificate paper -->
<div class="a" style="left:100px;top:6px;width:233px;height:169px;background:#fbfbfa;box-shadow:0 0 1px #ddd"></div>
<div class="a" style="left:103.5px;top:9px;width:225.5px;height:155px;border:1.2px solid #3b78c4"></div>
<div class="a" style="left:104.7px;top:10.2px;width:223px;height:152.5px;border:1.5px solid #e6d54e"></div>
<svg style="left:100px;top:6px" width="233" height="169">
 <g fill="#e8c43a">
  <g><path d="M10 29Q12 15 30 11" fill="none" stroke="#e8c43a" stroke-width="0.7"/><ellipse cx="10.8" cy="26" rx="2.9" ry="1.35" transform="rotate(-80 10.8 26)"/><ellipse cx="12" cy="21.5" rx="2.9" ry="1.35" transform="rotate(-70 12 21.5)"/><ellipse cx="14.3" cy="17.2" rx="2.9" ry="1.35" transform="rotate(-52 14.3 17.2)"/><ellipse cx="18" cy="13.8" rx="2.9" ry="1.35" transform="rotate(-32 18 13.8)"/><ellipse cx="22.5" cy="11.6" rx="2.9" ry="1.35" transform="rotate(-15 22.5 11.6)"/><ellipse cx="27.5" cy="10.6" rx="2.9" ry="1.35" transform="rotate(-3 27.5 10.6)"/><ellipse cx="14" cy="24" rx="2.9" ry="1.35" transform="rotate(-40 14 24)"/><ellipse cx="17" cy="19" rx="2.9" ry="1.35" transform="rotate(-20 17 19)"/><ellipse cx="21" cy="15.8" rx="2.9" ry="1.35" transform="rotate(-5 21 15.8)"/><ellipse cx="25.5" cy="14" rx="2.9" ry="1.35" transform="rotate(8 25.5 14)"/></g>
  <g transform="translate(233,0) scale(-1,1)"><path d="M10 29Q12 15 30 11" fill="none" stroke="#e8c43a" stroke-width="0.7"/><ellipse cx="10.8" cy="26" rx="2.9" ry="1.35" transform="rotate(-80 10.8 26)"/><ellipse cx="12" cy="21.5" rx="2.9" ry="1.35" transform="rotate(-70 12 21.5)"/><ellipse cx="14.3" cy="17.2" rx="2.9" ry="1.35" transform="rotate(-52 14.3 17.2)"/><ellipse cx="18" cy="13.8" rx="2.9" ry="1.35" transform="rotate(-32 18 13.8)"/><ellipse cx="22.5" cy="11.6" rx="2.9" ry="1.35" transform="rotate(-15 22.5 11.6)"/><ellipse cx="27.5" cy="10.6" rx="2.9" ry="1.35" transform="rotate(-3 27.5 10.6)"/><ellipse cx="14" cy="24" rx="2.9" ry="1.35" transform="rotate(-40 14 24)"/><ellipse cx="17" cy="19" rx="2.9" ry="1.35" transform="rotate(-20 17 19)"/><ellipse cx="21" cy="15.8" rx="2.9" ry="1.35" transform="rotate(-5 21 15.8)"/><ellipse cx="25.5" cy="14" rx="2.9" ry="1.35" transform="rotate(8 25.5 14)"/></g>
  <g transform="translate(0,160) scale(1,-1)"><path d="M10 29Q12 15 30 11" fill="none" stroke="#e8c43a" stroke-width="0.7"/><ellipse cx="10.8" cy="26" rx="2.9" ry="1.35" transform="rotate(-80 10.8 26)"/><ellipse cx="12" cy="21.5" rx="2.9" ry="1.35" transform="rotate(-70 12 21.5)"/><ellipse cx="14.3" cy="17.2" rx="2.9" ry="1.35" transform="rotate(-52 14.3 17.2)"/><ellipse cx="18" cy="13.8" rx="2.9" ry="1.35" transform="rotate(-32 18 13.8)"/><ellipse cx="22.5" cy="11.6" rx="2.9" ry="1.35" transform="rotate(-15 22.5 11.6)"/><ellipse cx="27.5" cy="10.6" rx="2.9" ry="1.35" transform="rotate(-3 27.5 10.6)"/><ellipse cx="14" cy="24" rx="2.9" ry="1.35" transform="rotate(-40 14 24)"/><ellipse cx="17" cy="19" rx="2.9" ry="1.35" transform="rotate(-20 17 19)"/><ellipse cx="21" cy="15.8" rx="2.9" ry="1.35" transform="rotate(-5 21 15.8)"/><ellipse cx="25.5" cy="14" rx="2.9" ry="1.35" transform="rotate(8 25.5 14)"/></g>
  <g transform="translate(233,160) scale(-1,-1)"><path d="M10 29Q12 15 30 11" fill="none" stroke="#e8c43a" stroke-width="0.7"/><ellipse cx="10.8" cy="26" rx="2.9" ry="1.35" transform="rotate(-80 10.8 26)"/><ellipse cx="12" cy="21.5" rx="2.9" ry="1.35" transform="rotate(-70 12 21.5)"/><ellipse cx="14.3" cy="17.2" rx="2.9" ry="1.35" transform="rotate(-52 14.3 17.2)"/><ellipse cx="18" cy="13.8" rx="2.9" ry="1.35" transform="rotate(-32 18 13.8)"/><ellipse cx="22.5" cy="11.6" rx="2.9" ry="1.35" transform="rotate(-15 22.5 11.6)"/><ellipse cx="27.5" cy="10.6" rx="2.9" ry="1.35" transform="rotate(-3 27.5 10.6)"/><ellipse cx="14" cy="24" rx="2.9" ry="1.35" transform="rotate(-40 14 24)"/><ellipse cx="17" cy="19" rx="2.9" ry="1.35" transform="rotate(-20 17 19)"/><ellipse cx="21" cy="15.8" rx="2.9" ry="1.35" transform="rotate(-5 21 15.8)"/><ellipse cx="25.5" cy="14" rx="2.9" ry="1.35" transform="rotate(8 25.5 14)"/></g>
 </g>
 <!-- logos -->
 <path d="M99.5 21h11v10c0 3.5-2.5 6-5.5 6s-5.5-2.5-5.5-6z" fill="none" stroke="#3a4450" stroke-width="1.6"/>
 <path d="M102.5 22.5h5v8c0 1.6-1.1 2.8-2.5 2.8s-2.5-1.2-2.5-2.8z" fill="#e2c23a"/>
 <rect x="100" y="17" width="10" height="3" fill="#7a8088"/>
 <circle cx="127.3" cy="25.6" r="9" fill="#e8772a"/>
 <circle cx="127.3" cy="25.6" r="6.8" fill="none" stroke="#fff" stroke-width="0.8"/>
 <path d="M123 31v-6M125.5 31v-8M127.3 31v-9M129 31v-8M131.5 31v-6" stroke="#fff" stroke-width="0.7"/>
 <!-- stamp -->
 <g opacity="0.9">
 <circle cx="90.7" cy="139.3" r="25.8" fill="none" stroke="#4a7ae0" stroke-width="2"/>
 <circle cx="90.7" cy="139.3" r="22.6" fill="none" stroke="#9ab4ee" stroke-width="3.5" stroke-dasharray="1.5 1.2"/>
 <circle cx="90.7" cy="139.3" r="19.5" fill="none" stroke="#5a84e0" stroke-width="1.2"/>
 <circle cx="90.7" cy="139.3" r="15.2" fill="none" stroke="#7a9ae6" stroke-width="0.9"/>
 <path d="M84.5 129.5h12v9.5c0 3.5-3 6-6 7.5-3-1.5-6-4-6-7.5z" fill="none" stroke="#4a70d0" stroke-width="1"/>
 <path d="M90.5 131v13M87 134c0 5 2 7 3.5 7s3.5-2 3.5-7" fill="none" stroke="#4a70d0" stroke-width="0.9"/>
 </g>
 <path d="M96 147C106 140 118 133 130 131C140 130 142 140 134 144C124 148 110 146 104 140M116 133L132 114" fill="none" stroke="#7a72c8" stroke-width="0.8"/>
</svg>
<div class="t" style="left:164px;top:49px;font-size:9.5px;font-weight:bold;color:#22425a">СЕРТИФІКАТ №</div>
<div class="t" style="left:239px;top:49px;font-size:8px;font-style:italic;color:#5b63b8">10/14.02-24</div>
<div class="t" style="left:156px;top:62px;font-size:10px;color:#1e3a50;-webkit-text-stroke:0.25px #1e3a50">про проходження тренінгу</div>
<div class="t" style="left:138px;top:73px;font-size:6px;font-weight:bold;color:#33485a">для викладачів і співробітників «Teaching success»</div>
<div class="t" style="left:208px;top:86px;font-size:4.5px;color:#8a8a8a">Виданий</div>
<div class="t" style="left:128.5px;top:93.5px;font-size:12.7px;font-weight:bold;color:#1f3f55">Стрижак Тетяні Анатоліївні</div>
<div class="t" style="left:166px;top:108.5px;font-size:6.9px;color:#3a4a58">з 27.03.2024 р. по 05.06.2024 р.</div>
<div class="t" style="left:165.5px;top:121px;font-size:5.2px;font-weight:bold;color:#33485a">у кількості 150 годин (5 кредитів ЄКТС)</div>
<div class="t" style="left:139.5px;top:136.5px;font-size:4.5px;color:#33485a">Перший проректор</div>
<div class="t" style="left:257px;top:139.5px;font-size:4.5px;font-weight:bold;color:#33485a">Дмитро МАРЧЕНКО</div>
<div class="t" style="left:204px;top:152.5px;font-size:4.8px;font-weight:bold;color:#33485a">Київ - 2024</div>
<!-- blue banner -->
<div class="a" style="left:79px;top:177px;width:274px;height:50px;background:#5081d5"></div>
<div class="t" style="left:132.3px;top:194.5px;font-size:13.1px;color:#24396e;-webkit-text-stroke:0.2px #24396e">ВРУЧЕННЯ СЕРТИФІКАТІВ</div>


</div>
<div class="a" style="left:54px;top:164px;width:438px;height:248px;border:2px solid #c4314b"></div>
<!-- slide toolbar -->
<svg style="left:65px;top:419px" width="9" height="14"><path d="M7 1L1.6 6.7 7 12.4" fill="none" stroke="#cfcfcf" stroke-width="1.1"/></svg>
<div class="t" style="left:89.5px;top:419.2px;font-size:10.3px;color:#cfcfcf;transform-origin:0 0;transform:scaleX(0.89)">28 из 35</div>
<svg style="left:141px;top:419px" width="9" height="14"><path d="M1.2 1L6.6 6.7 1.2 12.4" fill="none" stroke="#cfcfcf" stroke-width="1.1"/></svg>
<svg style="left:165px;top:419px" width="15" height="14"><g fill="none" stroke="#cfcfcf" stroke-width="1.1"><rect x="1.6" y="1.2" width="4.4" height="4.4" rx="0.9"/><rect x="6" y="1.2" width="4.4" height="4.4" rx="0.9"/><rect x="1.6" y="5.6" width="4.4" height="4.4" rx="0.9"/></g><rect x="4.7" y="4.7" width="8.2" height="8.2" rx="0.6" fill="#1f1f1f" stroke="#cfcfcf" stroke-width="1.1"/></svg>
<svg style="left:191px;top:423px" width="14" height="4"><circle cx="2" cy="2" r="1.1" fill="#d6d6d6"/><circle cx="6.8" cy="2" r="1.1" fill="#d6d6d6"/><circle cx="11.6" cy="2" r="1.1" fill="#d6d6d6"/></svg>
<div class="a" style="left:218px;top:415px;width:1px;height:21px;background:#3a3a3a"></div>
<svg style="left:233px;top:419px" width="11" height="12"><path d="M0.5 0.5L10 6.2 5.6 6.8 2.6 11.2z" fill="#fff"/></svg>
<div class="a" style="left:227px;top:437px;width:23px;height:1.6px;background:#9ea3ee;border-radius:1px"></div>
<svg style="left:258px;top:416px" width="16" height="21">
 <rect x="1.7" y="6.4" width="11.5" height="13.4" rx="1.5" fill="#5c5c5c"/>
 <rect x="6.6" y="4" width="1.6" height="3" fill="#3d3d3d"/>
 <circle cx="7.4" cy="2.6" r="1.4" fill="#e02a2a"/>
 <circle cx="7.4" cy="13" r="1.6" fill="#464646"/>
</svg>
<svg style="left:285px;top:416px" width="15" height="21">
 <path d="M7.2 0.8L9 3.5C11 6 13 10 13 14v5.8H1.6V14C1.6 10 3.5 6 5.5 3.5z" fill="#2a2a2a"/>
 <path d="M6 2.5L7.3 0.8 8.6 2.5z" fill="#e0262a"/>
 <rect x="1.6" y="13.8" width="11.4" height="6" fill="#c8202a"/>
</svg>
<svg style="left:311px;top:416px" width="17" height="21">
 <path d="M4.2 4.8L12 1.8V5z" fill="#e8e226"/>
 <path d="M4 5h8.2l1.5 6c1 1 1.8 2 1.8 3.5v5.3H0.8v-5.3c0-1.5 0.8-2.5 1.8-3.5z" fill="#5c5c5c"/>
 <rect x="0.8" y="15" width="14.7" height="4.8" fill="#e5e21c"/>
</svg>
<svg style="left:339px;top:416px" width="14" height="21">
 <rect x="1.4" y="1" width="11" height="6" rx="2" fill="#f2a3ae"/>
 <rect x="1" y="6" width="11.8" height="13.8" rx="1" fill="#5a5a5a"/>
</svg>

<!-- notes -->
<div class="t" style="left:535px;top:187px;font-size:17.4px;color:#a4a4a4">Заметки отсутствуют</div>
<div class="t" style="left:529.7px;top:388.2px;font-size:12.8px;color:#b4b4b4">A</div>
<svg style="left:538px;top:387px" width="5" height="4"><path d="M0.5 3.2L2.3 1 4.1 3.2" fill="none" stroke="#b4b4b4" stroke-width="0.9"/></svg>
<div class="t" style="left:551.3px;top:390.2px;font-size:10.4px;color:#b4b4b4">A</div>
<svg style="left:558.5px;top:387.8px" width="5" height="4"><path d="M0.5 0.8L2.3 3 4.1 0.8" fill="none" stroke="#b4b4b4" stroke-width="0.9"/></svg>

<!-- RIGHT PANEL -->
<div class="a" style="left:811px;top:66px;width:213px;height:483px;background:#1f1f1f;border-left:1px solid #313131"></div>
<div class="a" style="left:812px;top:106px;width:212px;height:1px;background:#363636"></div>
<div class="t" style="left:825px;top:82.5px;font-size:10.6px;font-weight:bold;color:#fff">Участники</div>
<svg style="left:973px;top:86px" width="13" height="3"><circle cx="1.5" cy="1.5" r="1" fill="#d0d0d0"/><circle cx="6" cy="1.5" r="1" fill="#d0d0d0"/><circle cx="10.5" cy="1.5" r="1" fill="#d0d0d0"/></svg>
<svg style="left:995px;top:82px" width="10" height="10"><path d="M0.6 0.6L9.4 9.4M9.4 0.6L0.6 9.4" stroke="#d8d8d8" stroke-width="1.1"/></svg>
<!-- search -->
<div class="a" style="left:824px;top:117.5px;width:187px;height:21px;background:#2d2d2d;border-radius:3px"></div>
<div class="t" style="left:833.5px;top:124.8px;font-size:9.3px;color:#9a9a9a;transform-origin:0 0;transform:scaleX(0.96)">Введите имя</div>
<svg style="left:992px;top:123px" width="11" height="11"><circle cx="4.4" cy="4.4" r="3.4" fill="none" stroke="#c8c8c8" stroke-width="1.1"/><path d="M6.9 6.9L10 10" stroke="#c8c8c8" stroke-width="1.2"/></svg>
<!-- invite -->
<div class="a" style="left:824px;top:145.5px;width:187px;height:21px;background:#1f1f1f;border:1px solid #3d3d3d;border-radius:3px"></div>
<svg style="left:858px;top:150.5px" width="12" height="11"><path d="M5 1.2H2.3c-0.8 0-1.3 0.5-1.3 1.3v6.5c0 0.8 0.5 1.3 1.3 1.3h6.6c0.8 0 1.3-0.5 1.3-1.3V7.5" fill="none" stroke="#d8d8d8" stroke-width="1"/><path d="M4 7.5c0.5-2.5 2.5-4 5-4V1.4l2.5 2.7L9 6.8V5c-2 0-3.8 0.8-5 2.5z" fill="none" stroke="#d8d8d8" stroke-width="0.9" stroke-linejoin="round"/></svg>
<div class="t" style="left:874.5px;top:151.5px;font-size:9.6px;font-weight:bold;color:#f0f0f0;transform-origin:0 0;transform:scaleX(0.93)">Отправка приглашения</div>
<!-- section header -->
<svg style="left:815px;top:181px" width="6" height="5"><path d="M0.3 0.5h5.4L3 4.3z" fill="#c8c8c8"/></svg>
<div class="t" style="left:824.5px;top:179.5px;font-size:7.9px;color:#d8d8d8">В этом собрании (11)</div>
<div class="a" style="left:914px;top:175px;width:96px;height:16px;border:1px solid #3d3d3d;border-radius:3px;background:#1f1f1f"></div>
<div class="t" style="left:921px;top:179.5px;font-size:7.7px;font-weight:bold;color:#f0f0f0">Отключить все мик...</div>

<!-- participant list -->
<div class="a photo1" style="background:#888;left:825.3px;top:202.6px;width:21.2px;height:21.2px;border-radius:50%;overflow:hidden"><svg style="left:0;top:0" width="21.2" height="21.2" viewBox="0 0 22 22"><g filter="url(#b05)"><rect width="22" height="22" fill="#f4f4f4"/><path d="M5 14C4 8 6 2 12 2s8 5 7 12c-2 2-12 2-14 0z" fill="#6a2626"/><ellipse cx="11.5" cy="10.5" rx="4.5" ry="5.5" fill="#e6c0b0"/><path d="M7 7c2-3 6-4 9-1-3 0-6 0-9 1z" fill="#6a2626"/><path d="M2 22c1-4 4-6 8-7l6 0c3 1 5 3 6 7z" fill="#2a2434"/><path d="M6 22c0-3 2-5 5-5s3 3 3 5z" fill="#e8c8b8"/></g></svg></div>
<div class="t" style="left:852px;top:203.3px;font-size:9.6px;color:#ececec;transform-origin:0 50%;transform:scaleX(0.95)">Мартинець Лілія Асхатівна</div>
<div class="t" style="left:852px;top:216px;font-size:7.6px;color:#a0a0a0">Инициатор</div>
<svg style="left:999.5px;top:206.8px" width="10" height="13"><rect x="3" y="0.5" width="4" height="7.6" rx="2" fill="#fff"/><path d="M1.2 5.8c0 2.2 1.6 3.6 3.8 3.6s3.8-1.4 3.8-3.6M5 9.4v2.6" fill="none" stroke="#fff" stroke-width="1"/></svg>
<div class="a" style="left:825.3px;top:234.1px;width:21.2px;height:21.2px;border-radius:50%;background:#f1d6d9"></div>
<div class="t" style="left:835.9px;top:240.9px;font-size:9px;color:#8c2c3c;transform:translateX(-50%);-webkit-text-stroke:0.12px #8c2c3c">ВО</div>
<div class="t" style="left:852px;top:240.1px;font-size:9.6px;font-weight:normal;color:#ececec;transform-origin:0 50%;transform:scaleX(0.95)">Волох Вадим Олександрович</div>
<svg style="left:998.5px;top:238.5px" width="12" height="13"><rect x="4" y="0.8" width="4" height="7.2" rx="2" fill="none" stroke="#c4c4c4" stroke-width="0.9"/><path d="M2.2 5.8c0 2.2 1.6 3.6 3.8 3.6s3.8-1.4 3.8-3.6M6 9.4v2.4" fill="none" stroke="#c4c4c4" stroke-width="0.9"/><path d="M0.8 0.8L11.2 11.6" stroke="#c4c4c4" stroke-width="0.9"/></svg>
<div class="a photo2" style="background:#888;left:825.3px;top:266.2px;width:21.2px;height:21.2px;border-radius:50%;overflow:hidden"><svg style="left:0;top:0" width="21.2" height="21.2" viewBox="0 0 22 22"><g filter="url(#b05)"><rect width="22" height="22" fill="#2a2a2a"/><circle cx="11" cy="11" r="9.5" fill="none" stroke="#e8e8e8" stroke-width="2"/><path d="M3 8l4 3M19 8l-4 3M5 16l3-2M17 16l-3-2" stroke="#cfcfcf" stroke-width="1"/><ellipse cx="11" cy="17" rx="5" ry="4" fill="#f0f0f0"/><path d="M8 10c0-4 1.5-6 3-6s3 2 3 6v3H8z" fill="#d8602a"/><ellipse cx="11" cy="9.5" rx="2" ry="2.5" fill="#f0d0c0"/></g></svg></div>
<div class="t" style="left:852px;top:272.2px;font-size:9.6px;font-weight:normal;color:#ececec;transform-origin:0 50%;transform:scaleX(0.95)">Гробовод Вікторія Олександрів...</div>
<svg style="left:998.5px;top:270.6px" width="12" height="13"><rect x="4" y="0.8" width="4" height="7.2" rx="2" fill="none" stroke="#c4c4c4" stroke-width="0.9"/><path d="M2.2 5.8c0 2.2 1.6 3.6 3.8 3.6s3.8-1.4 3.8-3.6M6 9.4v2.4" fill="none" stroke="#c4c4c4" stroke-width="0.9"/><path d="M0.8 0.8L11.2 11.6" stroke="#c4c4c4" stroke-width="0.9"/></svg>
<div class="a photo3" style="background:#888;left:825.3px;top:298.3px;width:21.2px;height:21.2px;border-radius:50%;overflow:hidden"><svg style="left:0;top:0" width="21.2" height="21.2" viewBox="0 0 22 22"><g filter="url(#b05)"><rect width="22" height="22" fill="#4a5040"/><rect x="0" y="0" width="6" height="22" fill="#6a7a4a"/><path d="M4 22c1-5 4-7 7-7s6 2 7 7z" fill="#2a2a2e"/><path d="M9 22l2-5 2 5z" fill="#e8e8e8"/><ellipse cx="11.5" cy="10.5" rx="5" ry="6" fill="#c8a090"/><path d="M6 9c0-5 2-7 6-7s5 3 5 7c-2-2-8-3-11 0z" fill="#1a1414"/><path d="M8.5 14c1.5 1.5 4.5 1.5 6 0v2c-1.5 1.5-4.5 1.5-6 0z" fill="#3a2a2a"/></g></svg></div>
<div class="t" style="left:852px;top:304.3px;font-size:9.6px;font-weight:normal;color:#ececec;transform-origin:0 50%;transform:scaleX(0.95)">Карпіцький Миколай Миколай...</div>
<svg style="left:998.5px;top:302.7px" width="12" height="13"><rect x="4" y="0.8" width="4" height="7.2" rx="2" fill="none" stroke="#c4c4c4" stroke-width="0.9"/><path d="M2.2 5.8c0 2.2 1.6 3.6 3.8 3.6s3.8-1.4 3.8-3.6M6 9.4v2.4" fill="none" stroke="#c4c4c4" stroke-width="0.9"/><path d="M0.8 0.8L11.2 11.6" stroke="#c4c4c4" stroke-width="0.9"/></svg>
<div class="a" style="left:825.3px;top:330.4px;width:21.2px;height:21.2px;border-radius:50%;background:#f8e5cf"></div>
<div class="t" style="left:835.9px;top:337.2px;font-size:9px;color:#7a4a20;transform:translateX(-50%);-webkit-text-stroke:0.12px #7a4a20">МФ</div>
<div class="t" style="left:852px;top:336.4px;font-size:9.6px;font-weight:normal;color:#ececec;transform-origin:0 50%;transform:scaleX(0.95)">Могутова Валентина Федорівна</div>
<svg style="left:998.5px;top:334.8px" width="12" height="13"><rect x="4" y="0.8" width="4" height="7.2" rx="2" fill="none" stroke="#c4c4c4" stroke-width="0.9"/><path d="M2.2 5.8c0 2.2 1.6 3.6 3.8 3.6s3.8-1.4 3.8-3.6M6 9.4v2.4" fill="none" stroke="#c4c4c4" stroke-width="0.9"/><path d="M0.8 0.8L11.2 11.6" stroke="#c4c4c4" stroke-width="0.9"/></svg>
<div class="a" style="left:825.3px;top:362.5px;width:21.2px;height:21.2px;border-radius:50%;background:#f3d6d1"></div>
<div class="t" style="left:835.9px;top:369.3px;font-size:9px;color:#962e2c;transform:translateX(-50%);-webkit-text-stroke:0.12px #962e2c">НВ</div>
<div class="t" style="left:852px;top:368.5px;font-size:9.6px;font-weight:normal;color:#ececec;transform-origin:0 50%;transform:scaleX(0.95)">Нікітіна Віра Вікторівна</div>
<svg style="left:998.5px;top:366.9px" width="12" height="13"><rect x="4" y="0.8" width="4" height="7.2" rx="2" fill="none" stroke="#c4c4c4" stroke-width="0.9"/><path d="M2.2 5.8c0 2.2 1.6 3.6 3.8 3.6s3.8-1.4 3.8-3.6M6 9.4v2.4" fill="none" stroke="#c4c4c4" stroke-width="0.9"/><path d="M0.8 0.8L11.2 11.6" stroke="#c4c4c4" stroke-width="0.9"/></svg>
<div class="a photo4" style="background:#888;left:825.3px;top:394.6px;width:21.2px;height:21.2px;border-radius:50%;overflow:hidden"><svg style="left:0;top:0" width="21.2" height="21.2" viewBox="0 0 22 22"><defs><radialGradient id="p4g" cx="0.35" cy="0.2" r="0.8"><stop offset="0" stop-color="#e8e8e0"/><stop offset="0.4" stop-color="#9a8a5a"/><stop offset="1" stop-color="#6a5a38"/></radialGradient></defs><g filter="url(#b05)"><rect width="22" height="22" fill="url(#p4g)"/><ellipse cx="11" cy="11" rx="5" ry="6" fill="#8a6a5a"/><path d="M5 10c0-5 3-8 6-8s6 3 6 8c-2-3-10-3-12 0z" fill="#6a6a60"/><path d="M2 22c1-5 5-7 9-7s8 2 9 7z" fill="#7a98a8"/><path d="M5 15c4 1 8 1 12-1" stroke="#4a3a3a" stroke-width="1.2"/></g></svg></div>
<div class="a" style="left:822.6px;top:391.9px;width:26.6px;height:26.6px;border-radius:50%;border:1.5px solid #7f85f5"></div>
<div class="t" style="left:852px;top:400.6px;font-size:9.3px;font-weight:bold;color:#f4f4f4;transform-origin:0 50%;transform:scaleX(0.95)">Стрижак Тетяна Анатоліївна</div>
<svg style="left:999.5px;top:399.2px" width="10" height="13"><rect x="3" y="0.5" width="4" height="7.6" rx="2" fill="#fff"/><path d="M1.2 5.8c0 2.2 1.6 3.6 3.8 3.6s3.8-1.4 3.8-3.6M5 9.4v2.6" fill="none" stroke="#fff" stroke-width="1"/></svg>
<div class="a" style="left:825.3px;top:426.7px;width:21.2px;height:21.2px;border-radius:50%;background:#cfdcf2"></div>
<div class="t" style="left:835.9px;top:433.5px;font-size:9px;color:#1f4080;transform:translateX(-50%);-webkit-text-stroke:0.12px #1f4080">ХФ</div>
<div class="t" style="left:852px;top:432.7px;font-size:9.6px;font-weight:normal;color:#ececec;transform-origin:0 50%;transform:scaleX(0.95)">Халін Сергій Федосійович</div>
<svg style="left:998.5px;top:431.1px" width="12" height="13"><rect x="4" y="0.8" width="4" height="7.2" rx="2" fill="none" stroke="#c4c4c4" stroke-width="0.9"/><path d="M2.2 5.8c0 2.2 1.6 3.6 3.8 3.6s3.8-1.4 3.8-3.6M6 9.4v2.4" fill="none" stroke="#c4c4c4" stroke-width="0.9"/><path d="M0.8 0.8L11.2 11.6" stroke="#c4c4c4" stroke-width="0.9"/></svg>
<div class="a" style="left:825.3px;top:458.8px;width:21.2px;height:21.2px;border-radius:50%;background:#efe0d8"></div>
<div class="t" style="left:835.9px;top:465.6px;font-size:9px;color:#5e3428;transform:translateX(-50%);-webkit-text-stroke:0.12px #5e3428">ЧМ</div>
<div class="t" style="left:852px;top:464.8px;font-size:9.6px;font-weight:normal;color:#ececec;transform-origin:0 50%;transform:scaleX(0.95)">Чаплигін Євген Миколайович</div>
<svg style="left:998.5px;top:463.2px" width="12" height="13"><rect x="4" y="0.8" width="4" height="7.2" rx="2" fill="none" stroke="#c4c4c4" stroke-width="0.9"/><path d="M2.2 5.8c0 2.2 1.6 3.6 3.8 3.6s3.8-1.4 3.8-3.6M6 9.4v2.4" fill="none" stroke="#c4c4c4" stroke-width="0.9"/><path d="M0.8 0.8L11.2 11.6" stroke="#c4c4c4" stroke-width="0.9"/></svg>
<div class="a" style="left:825.3px;top:490.9px;width:21.2px;height:21.2px;border-radius:50%;background:#cbd8ee"></div>
<div class="t" style="left:835.9px;top:497.7px;font-size:9px;color:#1a3570;transform:translateX(-50%);-webkit-text-stroke:0.12px #1a3570">ЧО</div>
<div class="t" style="left:852px;top:496.9px;font-size:9.6px;font-weight:normal;color:#ececec;transform-origin:0 50%;transform:scaleX(0.95)">Чернишенко Ганна Олександрі...</div>
<svg style="left:998.5px;top:495.3px" width="12" height="13"><rect x="4" y="0.8" width="4" height="7.2" rx="2" fill="none" stroke="#c4c4c4" stroke-width="0.9"/><path d="M2.2 5.8c0 2.2 1.6 3.6 3.8 3.6s3.8-1.4 3.8-3.6M6 9.4v2.4" fill="none" stroke="#c4c4c4" stroke-width="0.9"/><path d="M0.8 0.8L11.2 11.6" stroke="#c4c4c4" stroke-width="0.9"/></svg>
<div class="a" style="left:825.3px;top:523.0px;width:21.2px;height:21.2px;border-radius:50%;background:#cfe8d4"></div>
<div class="t" style="left:835.9px;top:529.8px;font-size:9px;color:#1f5c34;transform:translateX(-50%);-webkit-text-stroke:0.12px #1f5c34">ЮВ</div>
<div class="t" style="left:852px;top:529.0px;font-size:9.6px;font-weight:normal;color:#ececec;transform-origin:0 50%;transform:scaleX(0.95)">Юркевич Юрій Вадимович</div>
<svg style="left:998.5px;top:527.4px" width="12" height="13"><rect x="4" y="0.8" width="4" height="7.2" rx="2" fill="none" stroke="#c4c4c4" stroke-width="0.9"/><path d="M2.2 5.8c0 2.2 1.6 3.6 3.8 3.6s3.8-1.4 3.8-3.6M6 9.4v2.4" fill="none" stroke="#c4c4c4" stroke-width="0.9"/><path d="M0.8 0.8L11.2 11.6" stroke="#c4c4c4" stroke-width="0.9"/></svg>

<!-- THUMBNAILS -->
<div class="a" style="left:4.7px;top:440.4px;width:801.7px;height:109px;overflow:hidden">
<div class="a" style="left:-89.9px;top:16px;width:115px;height:63px;background:#fff;overflow:hidden"><div class="a" style="left:0;top:0;width:438px;height:248px;transform-origin:0 0;transform:scale(0.26256,0.254)"><!-- decorations -->
<svg style="left:2px;top:2px" width="434" height="244">
 <g fill="#e9e0c6">
 <path d="M29.5 228Q12 218 9.6 200Q26 205 31 223Z"/>
 <path d="M29.5 228Q23 210 32.4 199Q39 212 34 227Z"/>
 <path d="M30 229Q40 212 55.6 210.4Q50 226 33 231Z"/>
 <path d="M28 227Q36 238 47 244L39 244Q31 238 26 231Z"/>
 </g>
 <path d="M381.8 163L388 185.9L407.9 172.6C406 188 400 198 390 200.6C380 200 372 196 372 190.9C372 180 376 172 381.8 163Z" fill="#f7e8ba"/>
 <circle cx="404.8" cy="217.2" r="6" fill="#fde08c"/>
</svg>
<!-- certificate paper -->
<div class="a" style="left:100px;top:6px;width:233px;height:169px;background:#fbfbfa;box-shadow:0 0 1px #ddd"></div>
<div class="a" style="left:103.5px;top:9px;width:225.5px;height:155px;border:1.2px solid #3b78c4"></div>
<div class="a" style="left:104.7px;top:10.2px;width:223px;height:152.5px;border:1.5px solid #e6d54e"></div>
<svg style="left:100px;top:6px" width="233" height="169">
 <g fill="#e8c43a">
  <g><path d="M10 29Q12 15 30 11" fill="none" stroke="#e8c43a" stroke-width="0.7"/><ellipse cx="10.8" cy="26" rx="2.9" ry="1.35" transform="rotate(-80 10.8 26)"/><ellipse cx="12" cy="21.5" rx="2.9" ry="1.35" transform="rotate(-70 12 21.5)"/><ellipse cx="14.3" cy="17.2" rx="2.9" ry="1.35" transform="rotate(-52 14.3 17.2)"/><ellipse cx="18" cy="13.8" rx="2.9" ry="1.35" transform="rotate(-32 18 13.8)"/><ellipse cx="22.5" cy="11.6" rx="2.9" ry="1.35" transform="rotate(-15 22.5 11.6)"/><ellipse cx="27.5" cy="10.6" rx="2.9" ry="1.35" transform="rotate(-3 27.5 10.6)"/><ellipse cx="14" cy="24" rx="2.9" ry="1.35" transform="rotate(-40 14 24)"/><ellipse cx="17" cy="19" rx="2.9" ry="1.35" transform="rotate(-20 17 19)"/><ellipse cx="21" cy="15.8" rx="2.9" ry="1.35" transform="rotate(-5 21 15.8)"/><ellipse cx="25.5" cy="14" rx="2.9" ry="1.35" transform="rotate(8 25.5 14)"/></g>
  <g transform="translate(233,0) scale(-1,1)"><path d="M10 29Q12 15 30 11" fill="none" stroke="#e8c43a" stroke-width="0.7"/><ellipse cx="10.8" cy="26" rx="2.9" ry="1.35" transform="rotate(-80 10.8 26)"/><ellipse cx="12" cy="21.5" rx="2.9" ry="1.35" transform="rotate(-70 12 21.5)"/><ellipse cx="14.3" cy="17.2" rx="2.9" ry="1.35" transform="rotate(-52 14.3 17.2)"/><ellipse cx="18" cy="13.8" rx="2.9" ry="1.35" transform="rotate(-32 18 13.8)"/><ellipse cx="22.5" cy="11.6" rx="2.9" ry="1.35" transform="rotate(-15 22.5 11.6)"/><ellipse cx="27.5" cy="10.6" rx="2.9" ry="1.35" transform="rotate(-3 27.5 10.6)"/><ellipse cx="14" cy="24" rx="2.9" ry="1.35" transform="rotate(-40 14 24)"/><ellipse cx="17" cy="19" rx="2.9" ry="1.35" transform="rotate(-20 17 19)"/><ellipse cx="21" cy="15.8" rx="2.9" ry="1.35" transform="rotate(-5 21 15.8)"/><ellipse cx="25.5" cy="14" rx="2.9" ry="1.35" transform="rotate(8 25.5 14)"/></g>
  <g transform="translate(0,160) scale(1,-1)"><path d="M10 29Q12 15 30 11" fill="none" stroke="#e8c43a" stroke-width="0.7"/><ellipse cx="10.8" cy="26" rx="2.9" ry="1.35" transform="rotate(-80 10.8 26)"/><ellipse cx="12" cy="21.5" rx="2.9" ry="1.35" transform="rotate(-70 12 21.5)"/><ellipse cx="14.3" cy="17.2" rx="2.9" ry="1.35" transform="rotate(-52 14.3 17.2)"/><ellipse cx="18" cy="13.8" rx="2.9" ry="1.35" transform="rotate(-32 18 13.8)"/><ellipse cx="22.5" cy="11.6" rx="2.9" ry="1.35" transform="rotate(-15 22.5 11.6)"/><ellipse cx="27.5" cy="10.6" rx="2.9" ry="1.35" transform="rotate(-3 27.5 10.6)"/><ellipse cx="14" cy="24" rx="2.9" ry="1.35" transform="rotate(-40 14 24)"/><ellipse cx="17" cy="19" rx="2.9" ry="1.35" transform="rotate(-20 17 19)"/><ellipse cx="21" cy="15.8" rx="2.9" ry="1.35" transform="rotate(-5 21 15.8)"/><ellipse cx="25.5" cy="14" rx="2.9" ry="1.35" transform="rotate(8 25.5 14)"/></g>
  <g transform="translate(233,160) scale(-1,-1)"><path d="M10 29Q12 15 30 11" fill="none" stroke="#e8c43a" stroke-width="0.7"/><ellipse cx="10.8" cy="26" rx="2.9" ry="1.35" transform="rotate(-80 10.8 26)"/><ellipse cx="12" cy="21.5" rx="2.9" ry="1.35" transform="rotate(-70 12 21.5)"/><ellipse cx="14.3" cy="17.2" rx="2.9" ry="1.35" transform="rotate(-52 14.3 17.2)"/><ellipse cx="18" cy="13.8" rx="2.9" ry="1.35" transform="rotate(-32 18 13.8)"/><ellipse cx="22.5" cy="11.6" rx="2.9" ry="1.35" transform="rotate(-15 22.5 11.6)"/><ellipse cx="27.5" cy="10.6" rx="2.9" ry="1.35" transform="rotate(-3 27.5 10.6)"/><ellipse cx="14" cy="24" rx="2.9" ry="1.35" transform="rotate(-40 14 24)"/><ellipse cx="17" cy="19" rx="2.9" ry="1.35" transform="rotate(-20 17 19)"/><ellipse cx="21" cy="15.8" rx="2.9" ry="1.35" transform="rotate(-5 21 15.8)"/><ellipse cx="25.5" cy="14" rx="2.9" ry="1.35" transform="rotate(8 25.5 14)"/></g>
 </g>
 <!-- logos -->
 <path d="M99.5 21h11v10c0 3.5-2.5 6-5.5 6s-5.5-2.5-5.5-6z" fill="none" stroke="#3a4450" stroke-width="1.6"/>
 <path d="M102.5 22.5h5v8c0 1.6-1.1 2.8-2.5 2.8s-2.5-1.2-2.5-2.8z" fill="#e2c23a"/>
 <rect x="100" y="17" width="10" height="3" fill="#7a8088"/>
 <circle cx="127.3" cy="25.6" r="9" fill="#e8772a"/>
 <circle cx="127.3" cy="25.6" r="6.8" fill="none" stroke="#fff" stroke-width="0.8"/>
 <path d="M123 31v-6M125.5 31v-8M127.3 31v-9M129 31v-8M131.5 31v-6" stroke="#fff" stroke-width="0.7"/>
 <!-- stamp -->
 <g opacity="0.9">
 <circle cx="90.7" cy="139.3" r="25.8" fill="none" stroke="#4a7ae0" stroke-width="2"/>
 <circle cx="90.7" cy="139.3" r="22.6" fill="none" stroke="#9ab4ee" stroke-width="3.5" stroke-dasharray="1.5 1.2"/>
 <circle cx="90.7" cy="139.3" r="19.5" fill="none" stroke="#5a84e0" stroke-width="1.2"/>
 <circle cx="90.7" cy="139.3" r="15.2" fill="none" stroke="#7a9ae6" stroke-width="0.9"/>
 <path d="M84.5 129.5h12v9.5c0 3.5-3 6-6 7.5-3-1.5-6-4-6-7.5z" fill="none" stroke="#4a70d0" stroke-width="1"/>
 <path d="M90.5 131v13M87 134c0 5 2 7 3.5 7s3.5-2 3.5-7" fill="none" stroke="#4a70d0" stroke-width="0.9"/>
 </g>
 <path d="M96 147C106 140 118 133 130 131C140 130 142 140 134 144C124 148 110 146 104 140M116 133L132 114" fill="none" stroke="#7a72c8" stroke-width="0.8"/>
</svg>
<div class="t" style="left:164px;top:49px;font-size:9.5px;font-weight:bold;color:#22425a">СЕРТИФІКАТ №</div>
<div class="t" style="left:239px;top:49px;font-size:8px;font-style:italic;color:#5b63b8">10/14.02-24</div>
<div class="t" style="left:156px;top:62px;font-size:10px;color:#1e3a50;-webkit-text-stroke:0.25px #1e3a50">про проходження тренінгу</div>
<div class="t" style="left:138px;top:73px;font-size:6px;font-weight:bold;color:#33485a">для викладачів і співробітників «Teaching success»</div>
<div class="t" style="left:208px;top:86px;font-size:4.5px;color:#8a8a8a">Виданий</div>
<div class="t" style="left:128.5px;top:93.5px;font-size:12.7px;font-weight:bold;color:#1f3f55">Стрижак Тетяні Анатоліївні</div>
<div class="t" style="left:166px;top:108.5px;font-size:6.9px;color:#3a4a58">з 27.03.2024 р. по 05.06.2024 р.</div>
<div class="t" style="left:165.5px;top:121px;font-size:5.2px;font-weight:bold;color:#33485a">у кількості 150 годин (5 кредитів ЄКТС)</div>
<div class="t" style="left:139.5px;top:136.5px;font-size:4.5px;color:#33485a">Перший проректор</div>
<div class="t" style="left:257px;top:139.5px;font-size:4.5px;font-weight:bold;color:#33485a">Дмитро МАРЧЕНКО</div>
<div class="t" style="left:204px;top:152.5px;font-size:4.8px;font-weight:bold;color:#33485a">Київ - 2024</div>
<!-- blue banner -->
<div class="a" style="left:79px;top:177px;width:274px;height:50px;background:#5081d5"></div>
<div class="t" style="left:132.3px;top:194.5px;font-size:13.1px;color:#24396e;-webkit-text-stroke:0.2px #24396e">ВРУЧЕННЯ СЕРТИФІКАТІВ</div>


</div></div>
<div class="a" style="left:40.8px;top:16px;width:115px;height:63px;background:#fff;overflow:hidden"><div class="a" style="left:0;top:0;width:438px;height:248px;transform-origin:0 0;transform:scale(0.26256,0.254)"><!-- decorations -->
<svg style="left:2px;top:2px" width="434" height="244">
 <g fill="#e9e0c6">
 <path d="M29.5 228Q12 218 9.6 200Q26 205 31 223Z"/>
 <path d="M29.5 228Q23 210 32.4 199Q39 212 34 227Z"/>
 <path d="M30 229Q40 212 55.6 210.4Q50 226 33 231Z"/>
 <path d="M28 227Q36 238 47 244L39 244Q31 238 26 231Z"/>
 </g>
 <path d="M381.8 163L388 185.9L407.9 172.6C406 188 400 198 390 200.6C380 200 372 196 372 190.9C372 180 376 172 381.8 163Z" fill="#f7e8ba"/>
 <circle cx="404.8" cy="217.2" r="6" fill="#fde08c"/>
</svg>
<!-- certificate paper -->
<div class="a" style="left:100px;top:6px;width:233px;height:169px;background:#fbfbfa;box-shadow:0 0 1px #ddd"></div>
<div class="a" style="left:103.5px;top:9px;width:225.5px;height:155px;border:1.2px solid #3b78c4"></div>
<div class="a" style="left:104.7px;top:10.2px;width:223px;height:152.5px;border:1.5px solid #e6d54e"></div>
<svg style="left:100px;top:6px" width="233" height="169">
 <g fill="#e8c43a">
  <g><path d="M10 29Q12 15 30 11" fill="none" stroke="#e8c43a" stroke-width="0.7"/><ellipse cx="10.8" cy="26" rx="2.9" ry="1.35" transform="rotate(-80 10.8 26)"/><ellipse cx="12" cy="21.5" rx="2.9" ry="1.35" transform="rotate(-70 12 21.5)"/><ellipse cx="14.3" cy="17.2" rx="2.9" ry="1.35" transform="rotate(-52 14.3 17.2)"/><ellipse cx="18" cy="13.8" rx="2.9" ry="1.35" transform="rotate(-32 18 13.8)"/><ellipse cx="22.5" cy="11.6" rx="2.9" ry="1.35" transform="rotate(-15 22.5 11.6)"/><ellipse cx="27.5" cy="10.6" rx="2.9" ry="1.35" transform="rotate(-3 27.5 10.6)"/><ellipse cx="14" cy="24" rx="2.9" ry="1.35" transform="rotate(-40 14 24)"/><ellipse cx="17" cy="19" rx="2.9" ry="1.35" transform="rotate(-20 17 19)"/><ellipse cx="21" cy="15.8" rx="2.9" ry="1.35" transform="rotate(-5 21 15.8)"/><ellipse cx="25.5" cy="14" rx="2.9" ry="1.35" transform="rotate(8 25.5 14)"/></g>
  <g transform="translate(233,0) scale(-1,1)"><path d="M10 29Q12 15 30 11" fill="none" stroke="#e8c43a" stroke-width="0.7"/><ellipse cx="10.8" cy="26" rx="2.9" ry="1.35" transform="rotate(-80 10.8 26)"/><ellipse cx="12" cy="21.5" rx="2.9" ry="1.35" transform="rotate(-70 12 21.5)"/><ellipse cx="14.3" cy="17.2" rx="2.9" ry="1.35" transform="rotate(-52 14.3 17.2)"/><ellipse cx="18" cy="13.8" rx="2.9" ry="1.35" transform="rotate(-32 18 13.8)"/><ellipse cx="22.5" cy="11.6" rx="2.9" ry="1.35" transform="rotate(-15 22.5 11.6)"/><ellipse cx="27.5" cy="10.6" rx="2.9" ry="1.35" transform="rotate(-3 27.5 10.6)"/><ellipse cx="14" cy="24" rx="2.9" ry="1.35" transform="rotate(-40 14 24)"/><ellipse cx="17" cy="19" rx="2.9" ry="1.35" transform="rotate(-20 17 19)"/><ellipse cx="21" cy="15.8" rx="2.9" ry="1.35" transform="rotate(-5 21 15.8)"/><ellipse cx="25.5" cy="14" rx="2.9" ry="1.35" transform="rotate(8 25.5 14)"/></g>
  <g transform="translate(0,160) scale(1,-1)"><path d="M10 29Q12 15 30 11" fill="none" stroke="#e8c43a" stroke-width="0.7"/><ellipse cx="10.8" cy="26" rx="2.9" ry="1.35" transform="rotate(-80 10.8 26)"/><ellipse cx="12" cy="21.5" rx="2.9" ry="1.35" transform="rotate(-70 12 21.5)"/><ellipse cx="14.3" cy="17.2" rx="2.9" ry="1.35" transform="rotate(-52 14.3 17.2)"/><ellipse cx="18" cy="13.8" rx="2.9" ry="1.35" transform="rotate(-32 18 13.8)"/><ellipse cx="22.5" cy="11.6" rx="2.9" ry="1.35" transform="rotate(-15 22.5 11.6)"/><ellipse cx="27.5" cy="10.6" rx="2.9" ry="1.35" transform="rotate(-3 27.5 10.6)"/><ellipse cx="14" cy="24" rx="2.9" ry="1.35" transform="rotate(-40 14 24)"/><ellipse cx="17" cy="19" rx="2.9" ry="1.35" transform="rotate(-20 17 19)"/><ellipse cx="21" cy="15.8" rx="2.9" ry="1.35" transform="rotate(-5 21 15.8)"/><ellipse cx="25.5" cy="14" rx="2.9" ry="1.35" transform="rotate(8 25.5 14)"/></g>
  <g transform="translate(233,160) scale(-1,-1)"><path d="M10 29Q12 15 30 11" fill="none" stroke="#e8c43a" stroke-width="0.7"/><ellipse cx="10.8" cy="26" rx="2.9" ry="1.35" transform="rotate(-80 10.8 26)"/><ellipse cx="12" cy="21.5" rx="2.9" ry="1.35" transform="rotate(-70 12 21.5)"/><ellipse cx="14.3" cy="17.2" rx="2.9" ry="1.35" transform="rotate(-52 14.3 17.2)"/><ellipse cx="18" cy="13.8" rx="2.9" ry="1.35" transform="rotate(-32 18 13.8)"/><ellipse cx="22.5" cy="11.6" rx="2.9" ry="1.35" transform="rotate(-15 22.5 11.6)"/><ellipse cx="27.5" cy="10.6" rx="2.9" ry="1.35" transform="rotate(-3 27.5 10.6)"/><ellipse cx="14" cy="24" rx="2.9" ry="1.35" transform="rotate(-40 14 24)"/><ellipse cx="17" cy="19" rx="2.9" ry="1.35" transform="rotate(-20 17 19)"/><ellipse cx="21" cy="15.8" rx="2.9" ry="1.35" transform="rotate(-5 21 15.8)"/><ellipse cx="25.5" cy="14" rx="2.9" ry="1.35" transform="rotate(8 25.5 14)"/></g>
 </g>
 <!-- logos -->
 <path d="M99.5 21h11v10c0 3.5-2.5 6-5.5 6s-5.5-2.5-5.5-6z" fill="none" stroke="#3a4450" stroke-width="1.6"/>
 <path d="M102.5 22.5h5v8c0 1.6-1.1 2.8-2.5 2.8s-2.5-1.2-2.5-2.8z" fill="#e2c23a"/>
 <rect x="100" y="17" width="10" height="3" fill="#7a8088"/>
 <circle cx="127.3" cy="25.6" r="9" fill="#e8772a"/>
 <circle cx="127.3" cy="25.6" r="6.8" fill="none" stroke="#fff" stroke-width="0.8"/>
 <path d="M123 31v-6M125.5 31v-8M127.3 31v-9M129 31v-8M131.5 31v-6" stroke="#fff" stroke-width="0.7"/>
 <!-- stamp -->
 <g opacity="0.9">
 <circle cx="90.7" cy="139.3" r="25.8" fill="none" stroke="#4a7ae0" stroke-width="2"/>
 <circle cx="90.7" cy="139.3" r="22.6" fill="none" stroke="#9ab4ee" stroke-width="3.5" stroke-dasharray="1.5 1.2"/>
 <circle cx="90.7" cy="139.3" r="19.5" fill="none" stroke="#5a84e0" stroke-width="1.2"/>
 <circle cx="90.7" cy="139.3" r="15.2" fill="none" stroke="#7a9ae6" stroke-width="0.9"/>
 <path d="M84.5 129.5h12v9.5c0 3.5-3 6-6 7.5-3-1.5-6-4-6-7.5z" fill="none" stroke="#4a70d0" stroke-width="1"/>
 <path d="M90.5 131v13M87 134c0 5 2 7 3.5 7s3.5-2 3.5-7" fill="none" stroke="#4a70d0" stroke-width="0.9"/>
 </g>
 <path d="M96 147C106 140 118 133 130 131C140 130 142 140 134 144C124 148 110 146 104 140M116 133L132 114" fill="none" stroke="#7a72c8" stroke-width="0.8"/>
</svg>
<div class="t" style="left:164px;top:49px;font-size:9.5px;font-weight:bold;color:#22425a">СЕРТИФІКАТ №</div>
<div class="t" style="left:239px;top:49px;font-size:8px;font-style:italic;color:#5b63b8">10/14.02-24</div>
<div class="t" style="left:156px;top:62px;font-size:10px;color:#1e3a50;-webkit-text-stroke:0.25px #1e3a50">про проходження тренінгу</div>
<div class="t" style="left:138px;top:73px;font-size:6px;font-weight:bold;color:#33485a">для викладачів і співробітників «Teaching success»</div>
<div class="t" style="left:208px;top:86px;font-size:4.5px;color:#8a8a8a">Виданий</div>
<div class="t" style="left:128.5px;top:93.5px;font-size:12.7px;font-weight:bold;color:#1f3f55">Стрижак Тетяні Анатоліївні</div>
<div class="t" style="left:166px;top:108.5px;font-size:6.9px;color:#3a4a58">з 27.03.2024 р. по 05.06.2024 р.</div>
<div class="t" style="left:165.5px;top:121px;font-size:5.2px;font-weight:bold;color:#33485a">у кількості 150 годин (5 кредитів ЄКТС)</div>
<div class="t" style="left:139.5px;top:136.5px;font-size:4.5px;color:#33485a">Перший проректор</div>
<div class="t" style="left:257px;top:139.5px;font-size:4.5px;font-weight:bold;color:#33485a">Дмитро МАРЧЕНКО</div>
<div class="t" style="left:204px;top:152.5px;font-size:4.8px;font-weight:bold;color:#33485a">Київ - 2024</div>
<!-- blue banner -->
<div class="a" style="left:79px;top:177px;width:274px;height:50px;background:#5081d5"></div>
<div class="t" style="left:132.3px;top:194.5px;font-size:13.1px;color:#24396e;-webkit-text-stroke:0.2px #24396e">ВРУЧЕННЯ СЕРТИФІКАТІВ</div>


</div></div>
<div class="t" style="left:43.1px;top:83px;font-size:10.5px;color:#b8b8b8">25</div>
<div class="a" style="left:171.5px;top:16px;width:115px;height:63px;background:#fff;overflow:hidden"><div class="a" style="left:0;top:0;width:438px;height:248px;transform-origin:0 0;transform:scale(0.26256,0.254)"><!-- decorations -->
<svg style="left:2px;top:2px" width="434" height="244">
 <g fill="#e9e0c6">
 <path d="M29.5 228Q12 218 9.6 200Q26 205 31 223Z"/>
 <path d="M29.5 228Q23 210 32.4 199Q39 212 34 227Z"/>
 <path d="M30 229Q40 212 55.6 210.4Q50 226 33 231Z"/>
 <path d="M28 227Q36 238 47 244L39 244Q31 238 26 231Z"/>
 </g>
 <path d="M381.8 163L388 185.9L407.9 172.6C406 188 400 198 390 200.6C380 200 372 196 372 190.9C372 180 376 172 381.8 163Z" fill="#f7e8ba"/>
 <circle cx="404.8" cy="217.2" r="6" fill="#fde08c"/>
</svg>
<!-- certificate paper -->
<div class="a" style="left:100px;top:6px;width:233px;height:169px;background:#fbfbfa;box-shadow:0 0 1px #ddd"></div>
<div class="a" style="left:103.5px;top:9px;width:225.5px;height:155px;border:1.2px solid #3b78c4"></div>
<div class="a" style="left:104.7px;top:10.2px;width:223px;height:152.5px;border:1.5px solid #e6d54e"></div>
<svg style="left:100px;top:6px" width="233" height="169">
 <g fill="#e8c43a">
  <g><path d="M10 29Q12 15 30 11" fill="none" stroke="#e8c43a" stroke-width="0.7"/><ellipse cx="10.8" cy="26" rx="2.9" ry="1.35" transform="rotate(-80 10.8 26)"/><ellipse cx="12" cy="21.5" rx="2.9" ry="1.35" transform="rotate(-70 12 21.5)"/><ellipse cx="14.3" cy="17.2" rx="2.9" ry="1.35" transform="rotate(-52 14.3 17.2)"/><ellipse cx="18" cy="13.8" rx="2.9" ry="1.35" transform="rotate(-32 18 13.8)"/><ellipse cx="22.5" cy="11.6" rx="2.9" ry="1.35" transform="rotate(-15 22.5 11.6)"/><ellipse cx="27.5" cy="10.6" rx="2.9" ry="1.35" transform="rotate(-3 27.5 10.6)"/><ellipse cx="14" cy="24" rx="2.9" ry="1.35" transform="rotate(-40 14 24)"/><ellipse cx="17" cy="19" rx="2.9" ry="1.35" transform="rotate(-20 17 19)"/><ellipse cx="21" cy="15.8" rx="2.9" ry="1.35" transform="rotate(-5 21 15.8)"/><ellipse cx="25.5" cy="14" rx="2.9" ry="1.35" transform="rotate(8 25.5 14)"/></g>
  <g transform="translate(233,0) scale(-1,1)"><path d="M10 29Q12 15 30 11" fill="none" stroke="#e8c43a" stroke-width="0.7"/><ellipse cx="10.8" cy="26" rx="2.9" ry="1.35" transform="rotate(-80 10.8 26)"/><ellipse cx="12" cy="21.5" rx="2.9" ry="1.35" transform="rotate(-70 12 21.5)"/><ellipse cx="14.3" cy="17.2" rx="2.9" ry="1.35" transform="rotate(-52 14.3 17.2)"/><ellipse cx="18" cy="13.8" rx="2.9" ry="1.35" transform="rotate(-32 18 13.8)"/><ellipse cx="22.5" cy="11.6" rx="2.9" ry="1.35" transform="rotate(-15 22.5 11.6)"/><ellipse cx="27.5" cy="10.6" rx="2.9" ry="1.35" transform="rotate(-3 27.5 10.6)"/><ellipse cx="14" cy="24" rx="2.9" ry="1.35" transform="rotate(-40 14 24)"/><ellipse cx="17" cy="19" rx="2.9" ry="1.35" transform="rotate(-20 17 19)"/><ellipse cx="21" cy="15.8" rx="2.9" ry="1.35" transform="rotate(-5 21 15.8)"/><ellipse cx="25.5" cy="14" rx="2.9" ry="1.35" transform="rotate(8 25.5 14)"/></g>
  <g transform="translate(0,160) scale(1,-1)"><path d="M10 29Q12 15 30 11" fill="none" stroke="#e8c43a" stroke-width="0.7"/><ellipse cx="10.8" cy="26" rx="2.9" ry="1.35" transform="rotate(-80 10.8 26)"/><ellipse cx="12" cy="21.5" rx="2.9" ry="1.35" transform="rotate(-70 12 21.5)"/><ellipse cx="14.3" cy="17.2" rx="2.9" ry="1.35" transform="rotate(-52 14.3 17.2)"/><ellipse cx="18" cy="13.8" rx="2.9" ry="1.35" transform="rotate(-32 18 13.8)"/><ellipse cx="22.5" cy="11.6" rx="2.9" ry="1.35" transform="rotate(-15 22.5 11.6)"/><ellipse cx="27.5" cy="10.6" rx="2.9" ry="1.35" transform="rotate(-3 27.5 10.6)"/><ellipse cx="14" cy="24" rx="2.9" ry="1.35" transform="rotate(-40 14 24)"/><ellipse cx="17" cy="19" rx="2.9" ry="1.35" transform="rotate(-20 17 19)"/><ellipse cx="21" cy="15.8" rx="2.9" ry="1.35" transform="rotate(-5 21 15.8)"/><ellipse cx="25.5" cy="14" rx="2.9" ry="1.35" transform="rotate(8 25.5 14)"/></g>
  <g transform="translate(233,160) scale(-1,-1)"><path d="M10 29Q12 15 30 11" fill="none" stroke="#e8c43a" stroke-width="0.7"/><ellipse cx="10.8" cy="26" rx="2.9" ry="1.35" transform="rotate(-80 10.8 26)"/><ellipse cx="12" cy="21.5" rx="2.9" ry="1.35" transform="rotate(-70 12 21.5)"/><ellipse cx="14.3" cy="17.2" rx="2.9" ry="1.35" transform="rotate(-52 14.3 17.2)"/><ellipse cx="18" cy="13.8" rx="2.9" ry="1.35" transform="rotate(-32 18 13.8)"/><ellipse cx="22.5" cy="11.6" rx="2.9" ry="1.35" transform="rotate(-15 22.5 11.6)"/><ellipse cx="27.5" cy="10.6" rx="2.9" ry="1.35" transform="rotate(-3 27.5 10.6)"/><ellipse cx="14" cy="24" rx="2.9" ry="1.35" transform="rotate(-40 14 24)"/><ellipse cx="17" cy="19" rx="2.9" ry="1.35" transform="rotate(-20 17 19)"/><ellipse cx="21" cy="15.8" rx="2.9" ry="1.35" transform="rotate(-5 21 15.8)"/><ellipse cx="25.5" cy="14" rx="2.9" ry="1.35" transform="rotate(8 25.5 14)"/></g>
 </g>
 <!-- logos -->
 <path d="M99.5 21h11v10c0 3.5-2.5 6-5.5 6s-5.5-2.5-5.5-6z" fill="none" stroke="#3a4450" stroke-width="1.6"/>
 <path d="M102.5 22.5h5v8c0 1.6-1.1 2.8-2.5 2.8s-2.5-1.2-2.5-2.8z" fill="#e2c23a"/>
 <rect x="100" y="17" width="10" height="3" fill="#7a8088"/>
 <circle cx="127.3" cy="25.6" r="9" fill="#e8772a"/>
 <circle cx="127.3" cy="25.6" r="6.8" fill="none" stroke="#fff" stroke-width="0.8"/>
 <path d="M123 31v-6M125.5 31v-8M127.3 31v-9M129 31v-8M131.5 31v-6" stroke="#fff" stroke-width="0.7"/>
 <!-- stamp -->
 <g opacity="0.9">
 <circle cx="90.7" cy="139.3" r="25.8" fill="none" stroke="#4a7ae0" stroke-width="2"/>
 <circle cx="90.7" cy="139.3" r="22.6" fill="none" stroke="#9ab4ee" stroke-width="3.5" stroke-dasharray="1.5 1.2"/>
 <circle cx="90.7" cy="139.3" r="19.5" fill="none" stroke="#5a84e0" stroke-width="1.2"/>
 <circle cx="90.7" cy="139.3" r="15.2" fill="none" stroke="#7a9ae6" stroke-width="0.9"/>
 <path d="M84.5 129.5h12v9.5c0 3.5-3 6-6 7.5-3-1.5-6-4-6-7.5z" fill="none" stroke="#4a70d0" stroke-width="1"/>
 <path d="M90.5 131v13M87 134c0 5 2 7 3.5 7s3.5-2 3.5-7" fill="none" stroke="#4a70d0" stroke-width="0.9"/>
 </g>
 <path d="M96 147C106 140 118 133 130 131C140 130 142 140 134 144C124 148 110 146 104 140M116 133L132 114" fill="none" stroke="#7a72c8" stroke-width="0.8"/>
</svg>
<div class="t" style="left:164px;top:49px;font-size:9.5px;font-weight:bold;color:#22425a">СЕРТИФІКАТ №</div>
<div class="t" style="left:239px;top:49px;font-size:8px;font-style:italic;color:#5b63b8">10/14.02-24</div>
<div class="t" style="left:156px;top:62px;font-size:10px;color:#1e3a50;-webkit-text-stroke:0.25px #1e3a50">про проходження тренінгу</div>
<div class="t" style="left:138px;top:73px;font-size:6px;font-weight:bold;color:#33485a">для викладачів і співробітників «Teaching success»</div>
<div class="t" style="left:208px;top:86px;font-size:4.5px;color:#8a8a8a">Виданий</div>
<div class="t" style="left:128.5px;top:93.5px;font-size:12.7px;font-weight:bold;color:#1f3f55">Стрижак Тетяні Анатоліївні</div>
<div class="t" style="left:166px;top:108.5px;font-size:6.9px;color:#3a4a58">з 27.03.2024 р. по 05.06.2024 р.</div>
<div class="t" style="left:165.5px;top:121px;font-size:5.2px;font-weight:bold;color:#33485a">у кількості 150 годин (5 кредитів ЄКТС)</div>
<div class="t" style="left:139.5px;top:136.5px;font-size:4.5px;color:#33485a">Перший проректор</div>
<div class="t" style="left:257px;top:139.5px;font-size:4.5px;font-weight:bold;color:#33485a">Дмитро МАРЧЕНКО</div>
<div class="t" style="left:204px;top:152.5px;font-size:4.8px;font-weight:bold;color:#33485a">Київ - 2024</div>
<!-- blue banner -->
<div class="a" style="left:79px;top:177px;width:274px;height:50px;background:#5081d5"></div>
<div class="t" style="left:132.3px;top:194.5px;font-size:13.1px;color:#24396e;-webkit-text-stroke:0.2px #24396e">ВРУЧЕННЯ СЕРТИФІКАТІВ</div>


</div></div>
<div class="t" style="left:173.8px;top:83px;font-size:10.5px;color:#b8b8b8">26</div>
<div class="a" style="left:302.1px;top:16px;width:115px;height:63px;background:#fff;overflow:hidden"><div class="a" style="left:0;top:0;width:438px;height:248px;transform-origin:0 0;transform:scale(0.26256,0.254)"><!-- decorations -->
<svg style="left:2px;top:2px" width="434" height="244">
 <g fill="#e9e0c6">
 <path d="M29.5 228Q12 218 9.6 200Q26 205 31 223Z"/>
 <path d="M29.5 228Q23 210 32.4 199Q39 212 34 227Z"/>
 <path d="M30 229Q40 212 55.6 210.4Q50 226 33 231Z"/>
 <path d="M28 227Q36 238 47 244L39 244Q31 238 26 231Z"/>
 </g>
 <path d="M381.8 163L388 185.9L407.9 172.6C406 188 400 198 390 200.6C380 200 372 196 372 190.9C372 180 376 172 381.8 163Z" fill="#f7e8ba"/>
 <circle cx="404.8" cy="217.2" r="6" fill="#fde08c"/>
</svg>
<!-- certificate paper -->
<div class="a" style="left:100px;top:6px;width:233px;height:169px;background:#fbfbfa;box-shadow:0 0 1px #ddd"></div>
<div class="a" style="left:103.5px;top:9px;width:225.5px;height:155px;border:1.2px solid #3b78c4"></div>
<div class="a" style="left:104.7px;top:10.2px;width:223px;height:152.5px;border:1.5px solid #e6d54e"></div>
<svg style="left:100px;top:6px" width="233" height="169">
 <g fill="#e8c43a">
  <g><path d="M10 29Q12 15 30 11" fill="none" stroke="#e8c43a" stroke-width="0.7"/><ellipse cx="10.8" cy="26" rx="2.9" ry="1.35" transform="rotate(-80 10.8 26)"/><ellipse cx="12" cy="21.5" rx="2.9" ry="1.35" transform="rotate(-70 12 21.5)"/><ellipse cx="14.3" cy="17.2" rx="2.9" ry="1.35" transform="rotate(-52 14.3 17.2)"/><ellipse cx="18" cy="13.8" rx="2.9" ry="1.35" transform="rotate(-32 18 13.8)"/><ellipse cx="22.5" cy="11.6" rx="2.9" ry="1.35" transform="rotate(-15 22.5 11.6)"/><ellipse cx="27.5" cy="10.6" rx="2.9" ry="1.35" transform="rotate(-3 27.5 10.6)"/><ellipse cx="14" cy="24" rx="2.9" ry="1.35" transform="rotate(-40 14 24)"/><ellipse cx="17" cy="19" rx="2.9" ry="1.35" transform="rotate(-20 17 19)"/><ellipse cx="21" cy="15.8" rx="2.9" ry="1.35" transform="rotate(-5 21 15.8)"/><ellipse cx="25.5" cy="14" rx="2.9" ry="1.35" transform="rotate(8 25.5 14)"/></g>
  <g transform="translate(233,0) scale(-1,1)"><path d="M10 29Q12 15 30 11" fill="none" stroke="#e8c43a" stroke-width="0.7"/><ellipse cx="10.8" cy="26" rx="2.9" ry="1.35" transform="rotate(-80 10.8 26)"/><ellipse cx="12" cy="21.5" rx="2.9" ry="1.35" transform="rotate(-70 12 21.5)"/><ellipse cx="14.3" cy="17.2" rx="2.9" ry="1.35" transform="rotate(-52 14.3 17.2)"/><ellipse cx="18" cy="13.8" rx="2.9" ry="1.35" transform="rotate(-32 18 13.8)"/><ellipse cx="22.5" cy="11.6" rx="2.9" ry="1.35" transform="rotate(-15 22.5 11.6)"/><ellipse cx="27.5" cy="10.6" rx="2.9" ry="1.35" transform="rotate(-3 27.5 10.6)"/><ellipse cx="14" cy="24" rx="2.9" ry="1.35" transform="rotate(-40 14 24)"/><ellipse cx="17" cy="19" rx="2.9" ry="1.35" transform="rotate(-20 17 19)"/><ellipse cx="21" cy="15.8" rx="2.9" ry="1.35" transform="rotate(-5 21 15.8)"/><ellipse cx="25.5" cy="14" rx="2.9" ry="1.35" transform="rotate(8 25.5 14)"/></g>
  <g transform="translate(0,160) scale(1,-1)"><path d="M10 29Q12 15 30 11" fill="none" stroke="#e8c43a" stroke-width="0.7"/><ellipse cx="10.8" cy="26" rx="2.9" ry="1.35" transform="rotate(-80 10.8 26)"/><ellipse cx="12" cy="21.5" rx="2.9" ry="1.35" transform="rotate(-70 12 21.5)"/><ellipse cx="14.3" cy="17.2" rx="2.9" ry="1.35" transform="rotate(-52 14.3 17.2)"/><ellipse cx="18" cy="13.8" rx="2.9" ry="1.35" transform="rotate(-32 18 13.8)"/><ellipse cx="22.5" cy="11.6" rx="2.9" ry="1.35" transform="rotate(-15 22.5 11.6)"/><ellipse cx="27.5" cy="10.6" rx="2.9" ry="1.35" transform="rotate(-3 27.5 10.6)"/><ellipse cx="14" cy="24" rx="2.9" ry="1.35" transform="rotate(-40 14 24)"/><ellipse cx="17" cy="19" rx="2.9" ry="1.35" transform="rotate(-20 17 19)"/><ellipse cx="21" cy="15.8" rx="2.9" ry="1.35" transform="rotate(-5 21 15.8)"/><ellipse cx="25.5" cy="14" rx="2.9" ry="1.35" transform="rotate(8 25.5 14)"/></g>
  <g transform="translate(233,160) scale(-1,-1)"><path d="M10 29Q12 15 30 11" fill="none" stroke="#e8c43a" stroke-width="0.7"/><ellipse cx="10.8" cy="26" rx="2.9" ry="1.35" transform="rotate(-80 10.8 26)"/><ellipse cx="12" cy="21.5" rx="2.9" ry="1.35" transform="rotate(-70 12 21.5)"/><ellipse cx="14.3" cy="17.2" rx="2.9" ry="1.35" transform="rotate(-52 14.3 17.2)"/><ellipse cx="18" cy="13.8" rx="2.9" ry="1.35" transform="rotate(-32 18 13.8)"/><ellipse cx="22.5" cy="11.6" rx="2.9" ry="1.35" transform="rotate(-15 22.5 11.6)"/><ellipse cx="27.5" cy="10.6" rx="2.9" ry="1.35" transform="rotate(-3 27.5 10.6)"/><ellipse cx="14" cy="24" rx="2.9" ry="1.35" transform="rotate(-40 14 24)"/><ellipse cx="17" cy="19" rx="2.9" ry="1.35" transform="rotate(-20 17 19)"/><ellipse cx="21" cy="15.8" rx="2.9" ry="1.35" transform="rotate(-5 21 15.8)"/><ellipse cx="25.5" cy="14" rx="2.9" ry="1.35" transform="rotate(8 25.5 14)"/></g>
 </g>
 <!-- logos -->
 <path d="M99.5 21h11v10c0 3.5-2.5 6-5.5 6s-5.5-2.5-5.5-6z" fill="none" stroke="#3a4450" stroke-width="1.6"/>
 <path d="M102.5 22.5h5v8c0 1.6-1.1 2.8-2.5 2.8s-2.5-1.2-2.5-2.8z" fill="#e2c23a"/>
 <rect x="100" y="17" width="10" height="3" fill="#7a8088"/>
 <circle cx="127.3" cy="25.6" r="9" fill="#e8772a"/>
 <circle cx="127.3" cy="25.6" r="6.8" fill="none" stroke="#fff" stroke-width="0.8"/>
 <path d="M123 31v-6M125.5 31v-8M127.3 31v-9M129 31v-8M131.5 31v-6" stroke="#fff" stroke-width="0.7"/>
 <!-- stamp -->
 <g opacity="0.9">
 <circle cx="90.7" cy="139.3" r="25.8" fill="none" stroke="#4a7ae0" stroke-width="2"/>
 <circle cx="90.7" cy="139.3" r="22.6" fill="none" stroke="#9ab4ee" stroke-width="3.5" stroke-dasharray="1.5 1.2"/>
 <circle cx="90.7" cy="139.3" r="19.5" fill="none" stroke="#5a84e0" stroke-width="1.2"/>
 <circle cx="90.7" cy="139.3" r="15.2" fill="none" stroke="#7a9ae6" stroke-width="0.9"/>
 <path d="M84.5 129.5h12v9.5c0 3.5-3 6-6 7.5-3-1.5-6-4-6-7.5z" fill="none" stroke="#4a70d0" stroke-width="1"/>
 <path d="M90.5 131v13M87 134c0 5 2 7 3.5 7s3.5-2 3.5-7" fill="none" stroke="#4a70d0" stroke-width="0.9"/>
 </g>
 <path d="M96 147C106 140 118 133 130 131C140 130 142 140 134 144C124 148 110 146 104 140M116 133L132 114" fill="none" stroke="#7a72c8" stroke-width="0.8"/>
</svg>
<div class="t" style="left:164px;top:49px;font-size:9.5px;font-weight:bold;color:#22425a">СЕРТИФІКАТ №</div>
<div class="t" style="left:239px;top:49px;font-size:8px;font-style:italic;color:#5b63b8">10/14.02-24</div>
<div class="t" style="left:156px;top:62px;font-size:10px;color:#1e3a50;-webkit-text-stroke:0.25px #1e3a50">про проходження тренінгу</div>
<div class="t" style="left:138px;top:73px;font-size:6px;font-weight:bold;color:#33485a">для викладачів і співробітників «Teaching success»</div>
<div class="t" style="left:208px;top:86px;font-size:4.5px;color:#8a8a8a">Виданий</div>
<div class="t" style="left:128.5px;top:93.5px;font-size:12.7px;font-weight:bold;color:#1f3f55">Стрижак Тетяні Анатоліївні</div>
<div class="t" style="left:166px;top:108.5px;font-size:6.9px;color:#3a4a58">з 27.03.2024 р. по 05.06.2024 р.</div>
<div class="t" style="left:165.5px;top:121px;font-size:5.2px;font-weight:bold;color:#33485a">у кількості 150 годин (5 кредитів ЄКТС)</div>
<div class="t" style="left:139.5px;top:136.5px;font-size:4.5px;color:#33485a">Перший проректор</div>
<div class="t" style="left:257px;top:139.5px;font-size:4.5px;font-weight:bold;color:#33485a">Дмитро МАРЧЕНКО</div>
<div class="t" style="left:204px;top:152.5px;font-size:4.8px;font-weight:bold;color:#33485a">Київ - 2024</div>
<!-- blue banner -->
<div class="a" style="left:79px;top:177px;width:274px;height:50px;background:#5081d5"></div>
<div class="t" style="left:132.3px;top:194.5px;font-size:13.1px;color:#24396e;-webkit-text-stroke:0.2px #24396e">ВРУЧЕННЯ СЕРТИФІКАТІВ</div>


</div></div>
<div class="t" style="left:304.4px;top:83px;font-size:10.5px;color:#b8b8b8">27</div>
<div class="a" style="left:428.7px;top:12px;width:122.6px;height:72px;border:2.7px solid #dc6a25"></div>
<div class="a" style="left:432.9px;top:16px;width:115px;height:63px;background:#fff;overflow:hidden"><div class="a" style="left:0;top:0;width:438px;height:248px;transform-origin:0 0;transform:scale(0.26256,0.254)"><!-- decorations -->
<svg style="left:2px;top:2px" width="434" height="244">
 <g fill="#e9e0c6">
 <path d="M29.5 228Q12 218 9.6 200Q26 205 31 223Z"/>
 <path d="M29.5 228Q23 210 32.4 199Q39 212 34 227Z"/>
 <path d="M30 229Q40 212 55.6 210.4Q50 226 33 231Z"/>
 <path d="M28 227Q36 238 47 244L39 244Q31 238 26 231Z"/>
 </g>
 <path d="M381.8 163L388 185.9L407.9 172.6C406 188 400 198 390 200.6C380 200 372 196 372 190.9C372 180 376 172 381.8 163Z" fill="#f7e8ba"/>
 <circle cx="404.8" cy="217.2" r="6" fill="#fde08c"/>
</svg>
<!-- certificate paper -->
<div class="a" style="left:100px;top:6px;width:233px;height:169px;background:#fbfbfa;box-shadow:0 0 1px #ddd"></div>
<div class="a" style="left:103.5px;top:9px;width:225.5px;height:155px;border:1.2px solid #3b78c4"></div>
<div class="a" style="left:104.7px;top:10.2px;width:223px;height:152.5px;border:1.5px solid #e6d54e"></div>
<svg style="left:100px;top:6px" width="233" height="169">
 <g fill="#e8c43a">
  <g><path d="M10 29Q12 15 30 11" fill="none" stroke="#e8c43a" stroke-width="0.7"/><ellipse cx="10.8" cy="26" rx="2.9" ry="1.35" transform="rotate(-80 10.8 26)"/><ellipse cx="12" cy="21.5" rx="2.9" ry="1.35" transform="rotate(-70 12 21.5)"/><ellipse cx="14.3" cy="17.2" rx="2.9" ry="1.35" transform="rotate(-52 14.3 17.2)"/><ellipse cx="18" cy="13.8" rx="2.9" ry="1.35" transform="rotate(-32 18 13.8)"/><ellipse cx="22.5" cy="11.6" rx="2.9" ry="1.35" transform="rotate(-15 22.5 11.6)"/><ellipse cx="27.5" cy="10.6" rx="2.9" ry="1.35" transform="rotate(-3 27.5 10.6)"/><ellipse cx="14" cy="24" rx="2.9" ry="1.35" transform="rotate(-40 14 24)"/><ellipse cx="17" cy="19" rx="2.9" ry="1.35" transform="rotate(-20 17 19)"/><ellipse cx="21" cy="15.8" rx="2.9" ry="1.35" transform="rotate(-5 21 15.8)"/><ellipse cx="25.5" cy="14" rx="2.9" ry="1.35" transform="rotate(8 25.5 14)"/></g>
  <g transform="translate(233,0) scale(-1,1)"><path d="M10 29Q12 15 30 11" fill="none" stroke="#e8c43a" stroke-width="0.7"/><ellipse cx="10.8" cy="26" rx="2.9" ry="1.35" transform="rotate(-80 10.8 26)"/><ellipse cx="12" cy="21.5" rx="2.9" ry="1.35" transform="rotate(-70 12 21.5)"/><ellipse cx="14.3" cy="17.2" rx="2.9" ry="1.35" transform="rotate(-52 14.3 17.2)"/><ellipse cx="18" cy="13.8" rx="2.9" ry="1.35" transform="rotate(-32 18 13.8)"/><ellipse cx="22.5" cy="11.6" rx="2.9" ry="1.35" transform="rotate(-15 22.5 11.6)"/><ellipse cx="27.5" cy="10.6" rx="2.9" ry="1.35" transform="rotate(-3 27.5 10.6)"/><ellipse cx="14" cy="24" rx="2.9" ry="1.35" transform="rotate(-40 14 24)"/><ellipse cx="17" cy="19" rx="2.9" ry="1.35" transform="rotate(-20 17 19)"/><ellipse cx="21" cy="15.8" rx="2.9" ry="1.35" transform="rotate(-5 21 15.8)"/><ellipse cx="25.5" cy="14" rx="2.9" ry="1.35" transform="rotate(8 25.5 14)"/></g>
  <g transform="translate(0,160) scale(1,-1)"><path d="M10 29Q12 15 30 11" fill="none" stroke="#e8c43a" stroke-width="0.7"/><ellipse cx="10.8" cy="26" rx="2.9" ry="1.35" transform="rotate(-80 10.8 26)"/><ellipse cx="12" cy="21.5" rx="2.9" ry="1.35" transform="rotate(-70 12 21.5)"/><ellipse cx="14.3" cy="17.2" rx="2.9" ry="1.35" transform="rotate(-52 14.3 17.2)"/><ellipse cx="18" cy="13.8" rx="2.9" ry="1.35" transform="rotate(-32 18 13.8)"/><ellipse cx="22.5" cy="11.6" rx="2.9" ry="1.35" transform="rotate(-15 22.5 11.6)"/><ellipse cx="27.5" cy="10.6" rx="2.9" ry="1.35" transform="rotate(-3 27.5 10.6)"/><ellipse cx="14" cy="24" rx="2.9" ry="1.35" transform="rotate(-40 14 24)"/><ellipse cx="17" cy="19" rx="2.9" ry="1.35" transform="rotate(-20 17 19)"/><ellipse cx="21" cy="15.8" rx="2.9" ry="1.35" transform="rotate(-5 21 15.8)"/><ellipse cx="25.5" cy="14" rx="2.9" ry="1.35" transform="rotate(8 25.5 14)"/></g>
  <g transform="translate(233,160) scale(-1,-1)"><path d="M10 29Q12 15 30 11" fill="none" stroke="#e8c43a" stroke-width="0.7"/><ellipse cx="10.8" cy="26" rx="2.9" ry="1.35" transform="rotate(-80 10.8 26)"/><ellipse cx="12" cy="21.5" rx="2.9" ry="1.35" transform="rotate(-70 12 21.5)"/><ellipse cx="14.3" cy="17.2" rx="2.9" ry="1.35" transform="rotate(-52 14.3 17.2)"/><ellipse cx="18" cy="13.8" rx="2.9" ry="1.35" transform="rotate(-32 18 13.8)"/><ellipse cx="22.5" cy="11.6" rx="2.9" ry="1.35" transform="rotate(-15 22.5 11.6)"/><ellipse cx="27.5" cy="10.6" rx="2.9" ry="1.35" transform="rotate(-3 27.5 10.6)"/><ellipse cx="14" cy="24" rx="2.9" ry="1.35" transform="rotate(-40 14 24)"/><ellipse cx="17" cy="19" rx="2.9" ry="1.35" transform="rotate(-20 17 19)"/><ellipse cx="21" cy="15.8" rx="2.9" ry="1.35" transform="rotate(-5 21 15.8)"/><ellipse cx="25.5" cy="14" rx="2.9" ry="1.35" transform="rotate(8 25.5 14)"/></g>
 </g>
 <!-- logos -->
 <path d="M99.5 21h11v10c0 3.5-2.5 6-5.5 6s-5.5-2.5-5.5-6z" fill="none" stroke="#3a4450" stroke-width="1.6"/>
 <path d="M102.5 22.5h5v8c0 1.6-1.1 2.8-2.5 2.8s-2.5-1.2-2.5-2.8z" fill="#e2c23a"/>
 <rect x="100" y="17" width="10" height="3" fill="#7a8088"/>
 <circle cx="127.3" cy="25.6" r="9" fill="#e8772a"/>
 <circle cx="127.3" cy="25.6" r="6.8" fill="none" stroke="#fff" stroke-width="0.8"/>
 <path d="M123 31v-6M125.5 31v-8M127.3 31v-9M129 31v-8M131.5 31v-6" stroke="#fff" stroke-width="0.7"/>
 <!-- stamp -->
 <g opacity="0.9">
 <circle cx="90.7" cy="139.3" r="25.8" fill="none" stroke="#4a7ae0" stroke-width="2"/>
 <circle cx="90.7" cy="139.3" r="22.6" fill="none" stroke="#9ab4ee" stroke-width="3.5" stroke-dasharray="1.5 1.2"/>
 <circle cx="90.7" cy="139.3" r="19.5" fill="none" stroke="#5a84e0" stroke-width="1.2"/>
 <circle cx="90.7" cy="139.3" r="15.2" fill="none" stroke="#7a9ae6" stroke-width="0.9"/>
 <path d="M84.5 129.5h12v9.5c0 3.5-3 6-6 7.5-3-1.5-6-4-6-7.5z" fill="none" stroke="#4a70d0" stroke-width="1"/>
 <path d="M90.5 131v13M87 134c0 5 2 7 3.5 7s3.5-2 3.5-7" fill="none" stroke="#4a70d0" stroke-width="0.9"/>
 </g>
 <path d="M96 147C106 140 118 133 130 131C140 130 142 140 134 144C124 148 110 146 104 140M116 133L132 114" fill="none" stroke="#7a72c8" stroke-width="0.8"/>
</svg>
<div class="t" style="left:164px;top:49px;font-size:9.5px;font-weight:bold;color:#22425a">СЕРТИФІКАТ №</div>
<div class="t" style="left:239px;top:49px;font-size:8px;font-style:italic;color:#5b63b8">10/14.02-24</div>
<div class="t" style="left:156px;top:62px;font-size:10px;color:#1e3a50;-webkit-text-stroke:0.25px #1e3a50">про проходження тренінгу</div>
<div class="t" style="left:138px;top:73px;font-size:6px;font-weight:bold;color:#33485a">для викладачів і співробітників «Teaching success»</div>
<div class="t" style="left:208px;top:86px;font-size:4.5px;color:#8a8a8a">Виданий</div>
<div class="t" style="left:128.5px;top:93.5px;font-size:12.7px;font-weight:bold;color:#1f3f55">Стрижак Тетяні Анатоліївні</div>
<div class="t" style="left:166px;top:108.5px;font-size:6.9px;color:#3a4a58">з 27.03.2024 р. по 05.06.2024 р.</div>
<div class="t" style="left:165.5px;top:121px;font-size:5.2px;font-weight:bold;color:#33485a">у кількості 150 годин (5 кредитів ЄКТС)</div>
<div class="t" style="left:139.5px;top:136.5px;font-size:4.5px;color:#33485a">Перший проректор</div>
<div class="t" style="left:257px;top:139.5px;font-size:4.5px;font-weight:bold;color:#33485a">Дмитро МАРЧЕНКО</div>
<div class="t" style="left:204px;top:152.5px;font-size:4.8px;font-weight:bold;color:#33485a">Київ - 2024</div>
<!-- blue banner -->
<div class="a" style="left:79px;top:177px;width:274px;height:50px;background:#5081d5"></div>
<div class="t" style="left:132.3px;top:194.5px;font-size:13.1px;color:#24396e;-webkit-text-stroke:0.2px #24396e">ВРУЧЕННЯ СЕРТИФІКАТІВ</div>


</div></div>
<div class="t" style="left:435.2px;top:83px;font-size:10.5px;color:#dc6a25">28</div>
<div class="a" style="left:560.5px;top:13px;width:121.2px;height:69.4px;border:2px solid #b4b4b4"></div>
<div class="a" style="left:563.6px;top:16px;width:115px;height:63px;background:#fff;overflow:hidden"><div class="a" style="left:0;top:0;width:438px;height:248px;transform-origin:0 0;transform:scale(0.26256,0.254)"><!-- decorations -->
<svg style="left:2px;top:2px" width="434" height="244">
 <g fill="#e9e0c6">
 <path d="M29.5 228Q12 218 9.6 200Q26 205 31 223Z"/>
 <path d="M29.5 228Q23 210 32.4 199Q39 212 34 227Z"/>
 <path d="M30 229Q40 212 55.6 210.4Q50 226 33 231Z"/>
 <path d="M28 227Q36 238 47 244L39 244Q31 238 26 231Z"/>
 </g>
 <path d="M381.8 163L388 185.9L407.9 172.6C406 188 400 198 390 200.6C380 200 372 196 372 190.9C372 180 376 172 381.8 163Z" fill="#f7e8ba"/>
 <circle cx="404.8" cy="217.2" r="6" fill="#fde08c"/>
</svg>
<!-- certificate paper -->
<div class="a" style="left:100px;top:6px;width:233px;height:169px;background:#fbfbfa;box-shadow:0 0 1px #ddd"></div>
<div class="a" style="left:103.5px;top:9px;width:225.5px;height:155px;border:1.2px solid #3b78c4"></div>
<div class="a" style="left:104.7px;top:10.2px;width:223px;height:152.5px;border:1.5px solid #e6d54e"></div>
<svg style="left:100px;top:6px" width="233" height="169">
 <g fill="#e8c43a">
  <g><path d="M10 29Q12 15 30 11" fill="none" stroke="#e8c43a" stroke-width="0.7"/><ellipse cx="10.8" cy="26" rx="2.9" ry="1.35" transform="rotate(-80 10.8 26)"/><ellipse cx="12" cy="21.5" rx="2.9" ry="1.35" transform="rotate(-70 12 21.5)"/><ellipse cx="14.3" cy="17.2" rx="2.9" ry="1.35" transform="rotate(-52 14.3 17.2)"/><ellipse cx="18" cy="13.8" rx="2.9" ry="1.35" transform="rotate(-32 18 13.8)"/><ellipse cx="22.5" cy="11.6" rx="2.9" ry="1.35" transform="rotate(-15 22.5 11.6)"/><ellipse cx="27.5" cy="10.6" rx="2.9" ry="1.35" transform="rotate(-3 27.5 10.6)"/><ellipse cx="14" cy="24" rx="2.9" ry="1.35" transform="rotate(-40 14 24)"/><ellipse cx="17" cy="19" rx="2.9" ry="1.35" transform="rotate(-20 17 19)"/><ellipse cx="21" cy="15.8" rx="2.9" ry="1.35" transform="rotate(-5 21 15.8)"/><ellipse cx="25.5" cy="14" rx="2.9" ry="1.35" transform="rotate(8 25.5 14)"/></g>
  <g transform="translate(233,0) scale(-1,1)"><path d="M10 29Q12 15 30 11" fill="none" stroke="#e8c43a" stroke-width="0.7"/><ellipse cx="10.8" cy="26" rx="2.9" ry="1.35" transform="rotate(-80 10.8 26)"/><ellipse cx="12" cy="21.5" rx="2.9" ry="1.35" transform="rotate(-70 12 21.5)"/><ellipse cx="14.3" cy="17.2" rx="2.9" ry="1.35" transform="rotate(-52 14.3 17.2)"/><ellipse cx="18" cy="13.8" rx="2.9" ry="1.35" transform="rotate(-32 18 13.8)"/><ellipse cx="22.5" cy="11.6" rx="2.9" ry="1.35" transform="rotate(-15 22.5 11.6)"/><ellipse cx="27.5" cy="10.6" rx="2.9" ry="1.35" transform="rotate(-3 27.5 10.6)"/><ellipse cx="14" cy="24" rx="2.9" ry="1.35" transform="rotate(-40 14 24)"/><ellipse cx="17" cy="19" rx="2.9" ry="1.35" transform="rotate(-20 17 19)"/><ellipse cx="21" cy="15.8" rx="2.9" ry="1.35" transform="rotate(-5 21 15.8)"/><ellipse cx="25.5" cy="14" rx="2.9" ry="1.35" transform="rotate(8 25.5 14)"/></g>
  <g transform="translate(0,160) scale(1,-1)"><path d="M10 29Q12 15 30 11" fill="none" stroke="#e8c43a" stroke-width="0.7"/><ellipse cx="10.8" cy="26" rx="2.9" ry="1.35" transform="rotate(-80 10.8 26)"/><ellipse cx="12" cy="21.5" rx="2.9" ry="1.35" transform="rotate(-70 12 21.5)"/><ellipse cx="14.3" cy="17.2" rx="2.9" ry="1.35" transform="rotate(-52 14.3 17.2)"/><ellipse cx="18" cy="13.8" rx="2.9" ry="1.35" transform="rotate(-32 18 13.8)"/><ellipse cx="22.5" cy="11.6" rx="2.9" ry="1.35" transform="rotate(-15 22.5 11.6)"/><ellipse cx="27.5" cy="10.6" rx="2.9" ry="1.35" transform="rotate(-3 27.5 10.6)"/><ellipse cx="14" cy="24" rx="2.9" ry="1.35" transform="rotate(-40 14 24)"/><ellipse cx="17" cy="19" rx="2.9" ry="1.35" transform="rotate(-20 17 19)"/><ellipse cx="21" cy="15.8" rx="2.9" ry="1.35" transform="rotate(-5 21 15.8)"/><ellipse cx="25.5" cy="14" rx="2.9" ry="1.35" transform="rotate(8 25.5 14)"/></g>
  <g transform="translate(233,160) scale(-1,-1)"><path d="M10 29Q12 15 30 11" fill="none" stroke="#e8c43a" stroke-width="0.7"/><ellipse cx="10.8" cy="26" rx="2.9" ry="1.35" transform="rotate(-80 10.8 26)"/><ellipse cx="12" cy="21.5" rx="2.9" ry="1.35" transform="rotate(-70 12 21.5)"/><ellipse cx="14.3" cy="17.2" rx="2.9" ry="1.35" transform="rotate(-52 14.3 17.2)"/><ellipse cx="18" cy="13.8" rx="2.9" ry="1.35" transform="rotate(-32 18 13.8)"/><ellipse cx="22.5" cy="11.6" rx="2.9" ry="1.35" transform="rotate(-15 22.5 11.6)"/><ellipse cx="27.5" cy="10.6" rx="2.9" ry="1.35" transform="rotate(-3 27.5 10.6)"/><ellipse cx="14" cy="24" rx="2.9" ry="1.35" transform="rotate(-40 14 24)"/><ellipse cx="17" cy="19" rx="2.9" ry="1.35" transform="rotate(-20 17 19)"/><ellipse cx="21" cy="15.8" rx="2.9" ry="1.35" transform="rotate(-5 21 15.8)"/><ellipse cx="25.5" cy="14" rx="2.9" ry="1.35" transform="rotate(8 25.5 14)"/></g>
 </g>
 <!-- logos -->
 <path d="M99.5 21h11v10c0 3.5-2.5 6-5.5 6s-5.5-2.5-5.5-6z" fill="none" stroke="#3a4450" stroke-width="1.6"/>
 <path d="M102.5 22.5h5v8c0 1.6-1.1 2.8-2.5 2.8s-2.5-1.2-2.5-2.8z" fill="#e2c23a"/>
 <rect x="100" y="17" width="10" height="3" fill="#7a8088"/>
 <circle cx="127.3" cy="25.6" r="9" fill="#e8772a"/>
 <circle cx="127.3" cy="25.6" r="6.8" fill="none" stroke="#fff" stroke-width="0.8"/>
 <path d="M123 31v-6M125.5 31v-8M127.3 31v-9M129 31v-8M131.5 31v-6" stroke="#fff" stroke-width="0.7"/>
 <!-- stamp -->
 <g opacity="0.9">
 <circle cx="90.7" cy="139.3" r="25.8" fill="none" stroke="#4a7ae0" stroke-width="2"/>
 <circle cx="90.7" cy="139.3" r="22.6" fill="none" stroke="#9ab4ee" stroke-width="3.5" stroke-dasharray="1.5 1.2"/>
 <circle cx="90.7" cy="139.3" r="19.5" fill="none" stroke="#5a84e0" stroke-width="1.2"/>
 <circle cx="90.7" cy="139.3" r="15.2" fill="none" stroke="#7a9ae6" stroke-width="0.9"/>
 <path d="M84.5 129.5h12v9.5c0 3.5-3 6-6 7.5-3-1.5-6-4-6-7.5z" fill="none" stroke="#4a70d0" stroke-width="1"/>
 <path d="M90.5 131v13M87 134c0 5 2 7 3.5 7s3.5-2 3.5-7" fill="none" stroke="#4a70d0" stroke-width="0.9"/>
 </g>
 <path d="M96 147C106 140 118 133 130 131C140 130 142 140 134 144C124 148 110 146 104 140M116 133L132 114" fill="none" stroke="#7a72c8" stroke-width="0.8"/>
</svg>
<div class="t" style="left:164px;top:49px;font-size:9.5px;font-weight:bold;color:#22425a">СЕРТИФІКАТ №</div>
<div class="t" style="left:239px;top:49px;font-size:8px;font-style:italic;color:#5b63b8">10/14.02-24</div>
<div class="t" style="left:156px;top:62px;font-size:10px;color:#1e3a50;-webkit-text-stroke:0.25px #1e3a50">про проходження тренінгу</div>
<div class="t" style="left:138px;top:73px;font-size:6px;font-weight:bold;color:#33485a">для викладачів і співробітників «Teaching success»</div>
<div class="t" style="left:208px;top:86px;font-size:4.5px;color:#8a8a8a">Виданий</div>
<div class="t" style="left:128.5px;top:93.5px;font-size:12.7px;font-weight:bold;color:#1f3f55">Стрижак Тетяні Анатоліївні</div>
<div class="t" style="left:166px;top:108.5px;font-size:6.9px;color:#3a4a58">з 27.03.2024 р. по 05.06.2024 р.</div>
<div class="t" style="left:165.5px;top:121px;font-size:5.2px;font-weight:bold;color:#33485a">у кількості 150 годин (5 кредитів ЄКТС)</div>
<div class="t" style="left:139.5px;top:136.5px;font-size:4.5px;color:#33485a">Перший проректор</div>
<div class="t" style="left:257px;top:139.5px;font-size:4.5px;font-weight:bold;color:#33485a">Дмитро МАРЧЕНКО</div>
<div class="t" style="left:204px;top:152.5px;font-size:4.8px;font-weight:bold;color:#33485a">Київ - 2024</div>
<!-- blue banner -->
<div class="a" style="left:79px;top:177px;width:274px;height:50px;background:#5081d5"></div>
<div class="t" style="left:132.3px;top:194.5px;font-size:13.1px;color:#24396e;-webkit-text-stroke:0.2px #24396e">ВРУЧЕННЯ СЕРТИФІКАТІВ</div>


</div></div>
<div class="t" style="left:565.9px;top:83px;font-size:10.5px;color:#b8b8b8">29</div>
<div class="a" style="left:694.3px;top:16px;width:115px;height:63px;background:#fff;overflow:hidden"><div class="a" style="left:0;top:0;width:438px;height:248px;transform-origin:0 0;transform:scale(0.26256,0.254)"><!-- decorations -->
<svg style="left:2px;top:2px" width="434" height="244">
 <g fill="#e9e0c6">
 <path d="M29.5 228Q12 218 9.6 200Q26 205 31 223Z"/>
 <path d="M29.5 228Q23 210 32.4 199Q39 212 34 227Z"/>
 <path d="M30 229Q40 212 55.6 210.4Q50 226 33 231Z"/>
 <path d="M28 227Q36 238 47 244L39 244Q31 238 26 231Z"/>
 </g>
 <path d="M381.8 163L388 185.9L407.9 172.6C406 188 400 198 390 200.6C380 200 372 196 372 190.9C372 180 376 172 381.8 163Z" fill="#f7e8ba"/>
 <circle cx="404.8" cy="217.2" r="6" fill="#fde08c"/>
</svg>
<!-- certificate paper -->
<div class="a" style="left:100px;top:6px;width:233px;height:169px;background:#fbfbfa;box-shadow:0 0 1px #ddd"></div>
<div class="a" style="left:103.5px;top:9px;width:225.5px;height:155px;border:1.2px solid #3b78c4"></div>
<div class="a" style="left:104.7px;top:10.2px;width:223px;height:152.5px;border:1.5px solid #e6d54e"></div>
<svg style="left:100px;top:6px" width="233" height="169">
 <g fill="#e8c43a">
  <g><path d="M10 29Q12 15 30 11" fill="none" stroke="#e8c43a" stroke-width="0.7"/><ellipse cx="10.8" cy="26" rx="2.9" ry="1.35" transform="rotate(-80 10.8 26)"/><ellipse cx="12" cy="21.5" rx="2.9" ry="1.35" transform="rotate(-70 12 21.5)"/><ellipse cx="14.3" cy="17.2" rx="2.9" ry="1.35" transform="rotate(-52 14.3 17.2)"/><ellipse cx="18" cy="13.8" rx="2.9" ry="1.35" transform="rotate(-32 18 13.8)"/><ellipse cx="22.5" cy="11.6" rx="2.9" ry="1.35" transform="rotate(-15 22.5 11.6)"/><ellipse cx="27.5" cy="10.6" rx="2.9" ry="1.35" transform="rotate(-3 27.5 10.6)"/><ellipse cx="14" cy="24" rx="2.9" ry="1.35" transform="rotate(-40 14 24)"/><ellipse cx="17" cy="19" rx="2.9" ry="1.35" transform="rotate(-20 17 19)"/><ellipse cx="21" cy="15.8" rx="2.9" ry="1.35" transform="rotate(-5 21 15.8)"/><ellipse cx="25.5" cy="14" rx="2.9" ry="1.35" transform="rotate(8 25.5 14)"/></g>
  <g transform="translate(233,0) scale(-1,1)"><path d="M10 29Q12 15 30 11" fill="none" stroke="#e8c43a" stroke-width="0.7"/><ellipse cx="10.8" cy="26" rx="2.9" ry="1.35" transform="rotate(-80 10.8 26)"/><ellipse cx="12" cy="21.5" rx="2.9" ry="1.35" transform="rotate(-70 12 21.5)"/><ellipse cx="14.3" cy="17.2" rx="2.9" ry="1.35" transform="rotate(-52 14.3 17.2)"/><ellipse cx="18" cy="13.8" rx="2.9" ry="1.35" transform="rotate(-32 18 13.8)"/><ellipse cx="22.5" cy="11.6" rx="2.9" ry="1.35" transform="rotate(-15 22.5 11.6)"/><ellipse cx="27.5" cy="10.6" rx="2.9" ry="1.35" transform="rotate(-3 27.5 10.6)"/><ellipse cx="14" cy="24" rx="2.9" ry="1.35" transform="rotate(-40 14 24)"/><ellipse cx="17" cy="19" rx="2.9" ry="1.35" transform="rotate(-20 17 19)"/><ellipse cx="21" cy="15.8" rx="2.9" ry="1.35" transform="rotate(-5 21 15.8)"/><ellipse cx="25.5" cy="14" rx="2.9" ry="1.35" transform="rotate(8 25.5 14)"/></g>
  <g transform="translate(0,160) scale(1,-1)"><path d="M10 29Q12 15 30 11" fill="none" stroke="#e8c43a" stroke-width="0.7"/><ellipse cx="10.8" cy="26" rx="2.9" ry="1.35" transform="rotate(-80 10.8 26)"/><ellipse cx="12" cy="21.5" rx="2.9" ry="1.35" transform="rotate(-70 12 21.5)"/><ellipse cx="14.3" cy="17.2" rx="2.9" ry="1.35" transform="rotate(-52 14.3 17.2)"/><ellipse cx="18" cy="13.8" rx="2.9" ry="1.35" transform="rotate(-32 18 13.8)"/><ellipse cx="22.5" cy="11.6" rx="2.9" ry="1.35" transform="rotate(-15 22.5 11.6)"/><ellipse cx="27.5" cy="10.6" rx="2.9" ry="1.35" transform="rotate(-3 27.5 10.6)"/><ellipse cx="14" cy="24" rx="2.9" ry="1.35" transform="rotate(-40 14 24)"/><ellipse cx="17" cy="19" rx="2.9" ry="1.35" transform="rotate(-20 17 19)"/><ellipse cx="21" cy="15.8" rx="2.9" ry="1.35" transform="rotate(-5 21 15.8)"/><ellipse cx="25.5" cy="14" rx="2.9" ry="1.35" transform="rotate(8 25.5 14)"/></g>
  <g transform="translate(233,160) scale(-1,-1)"><path d="M10 29Q12 15 30 11" fill="none" stroke="#e8c43a" stroke-width="0.7"/><ellipse cx="10.8" cy="26" rx="2.9" ry="1.35" transform="rotate(-80 10.8 26)"/><ellipse cx="12" cy="21.5" rx="2.9" ry="1.35" transform="rotate(-70 12 21.5)"/><ellipse cx="14.3" cy="17.2" rx="2.9" ry="1.35" transform="rotate(-52 14.3 17.2)"/><ellipse cx="18" cy="13.8" rx="2.9" ry="1.35" transform="rotate(-32 18 13.8)"/><ellipse cx="22.5" cy="11.6" rx="2.9" ry="1.35" transform="rotate(-15 22.5 11.6)"/><ellipse cx="27.5" cy="10.6" rx="2.9" ry="1.35" transform="rotate(-3 27.5 10.6)"/><ellipse cx="14" cy="24" rx="2.9" ry="1.35" transform="rotate(-40 14 24)"/><ellipse cx="17" cy="19" rx="2.9" ry="1.35" transform="rotate(-20 17 19)"/><ellipse cx="21" cy="15.8" rx="2.9" ry="1.35" transform="rotate(-5 21 15.8)"/><ellipse cx="25.5" cy="14" rx="2.9" ry="1.35" transform="rotate(8 25.5 14)"/></g>
 </g>
 <!-- logos -->
 <path d="M99.5 21h11v10c0 3.5-2.5 6-5.5 6s-5.5-2.5-5.5-6z" fill="none" stroke="#3a4450" stroke-width="1.6"/>
 <path d="M102.5 22.5h5v8c0 1.6-1.1 2.8-2.5 2.8s-2.5-1.2-2.5-2.8z" fill="#e2c23a"/>
 <rect x="100" y="17" width="10" height="3" fill="#7a8088"/>
 <circle cx="127.3" cy="25.6" r="9" fill="#e8772a"/>
 <circle cx="127.3" cy="25.6" r="6.8" fill="none" stroke="#fff" stroke-width="0.8"/>
 <path d="M123 31v-6M125.5 31v-8M127.3 31v-9M129 31v-8M131.5 31v-6" stroke="#fff" stroke-width="0.7"/>
 <!-- stamp -->
 <g opacity="0.9">
 <circle cx="90.7" cy="139.3" r="25.8" fill="none" stroke="#4a7ae0" stroke-width="2"/>
 <circle cx="90.7" cy="139.3" r="22.6" fill="none" stroke="#9ab4ee" stroke-width="3.5" stroke-dasharray="1.5 1.2"/>
 <circle cx="90.7" cy="139.3" r="19.5" fill="none" stroke="#5a84e0" stroke-width="1.2"/>
 <circle cx="90.7" cy="139.3" r="15.2" fill="none" stroke="#7a9ae6" stroke-width="0.9"/>
 <path d="M84.5 129.5h12v9.5c0 3.5-3 6-6 7.5-3-1.5-6-4-6-7.5z" fill="none" stroke="#4a70d0" stroke-width="1"/>
 <path d="M90.5 131v13M87 134c0 5 2 7 3.5 7s3.5-2 3.5-7" fill="none" stroke="#4a70d0" stroke-width="0.9"/>
 </g>
 <path d="M96 147C106 140 118 133 130 131C140 130 142 140 134 144C124 148 110 146 104 140M116 133L132 114" fill="none" stroke="#7a72c8" stroke-width="0.8"/>
</svg>
<div class="t" style="left:164px;top:49px;font-size:9.5px;font-weight:bold;color:#22425a">СЕРТИФІКАТ №</div>
<div class="t" style="left:239px;top:49px;font-size:8px;font-style:italic;color:#5b63b8">10/14.02-24</div>
<div class="t" style="left:156px;top:62px;font-size:10px;color:#1e3a50;-webkit-text-stroke:0.25px #1e3a50">про проходження тренінгу</div>
<div class="t" style="left:138px;top:73px;font-size:6px;font-weight:bold;color:#33485a">для викладачів і співробітників «Teaching success»</div>
<div class="t" style="left:208px;top:86px;font-size:4.5px;color:#8a8a8a">Виданий</div>
<div class="t" style="left:128.5px;top:93.5px;font-size:12.7px;font-weight:bold;color:#1f3f55">Стрижак Тетяні Анатоліївні</div>
<div class="t" style="left:166px;top:108.5px;font-size:6.9px;color:#3a4a58">з 27.03.2024 р. по 05.06.2024 р.</div>
<div class="t" style="left:165.5px;top:121px;font-size:5.2px;font-weight:bold;color:#33485a">у кількості 150 годин (5 кредитів ЄКТС)</div>
<div class="t" style="left:139.5px;top:136.5px;font-size:4.5px;color:#33485a">Перший проректор</div>
<div class="t" style="left:257px;top:139.5px;font-size:4.5px;font-weight:bold;color:#33485a">Дмитро МАРЧЕНКО</div>
<div class="t" style="left:204px;top:152.5px;font-size:4.8px;font-weight:bold;color:#33485a">Київ - 2024</div>
<!-- blue banner -->
<div class="a" style="left:79px;top:177px;width:274px;height:50px;background:#5081d5"></div>
<div class="t" style="left:132.3px;top:194.5px;font-size:13.1px;color:#24396e;-webkit-text-stroke:0.2px #24396e">ВРУЧЕННЯ СЕРТИФІКАТІВ</div>


</div></div>
<div class="t" style="left:696.6px;top:83px;font-size:10.5px;color:#b8b8b8">30</div>
</div>
<svg style="left:395px;top:460px" width="22" height="22"><g filter="url(#b05)"><path d="M4 10c0-3 2-5 4-5l3-1c2 0 3 1 4 0 2-1 4 1 4 3v6c0 3-3 6-7 6-4 0-8-3-8-9z" fill="#fde6b8" opacity="0.9"/><path d="M4 10c0-3 2-5 4-5 1 4 0 10 3 14-4 0-7-3-7-9z" fill="#fbd2b8" opacity="0.9"/></g><path d="M3 5l2-2M5.5 3.5l2-1.5" stroke="#b8d0f0" stroke-width="0.8" opacity="0.7"/></svg>
<div class="a" style="left:644px;top:494.5px;width:38.5px;height:16px;background:#fff;border:1px solid #c8c8c8;border-radius:2px"></div>
<div class="t" style="left:648.5px;top:498px;font-size:9px;color:#242424;transform-origin:0 0;transform:scaleX(0.92)">Slide 29</div>
<div class="a" style="left:548px;top:541.5px;width:140px;height:3px;border-radius:2px;background:#4a4a4a"></div>

<!-- TASKBAR -->
<div class="a" style="left:0;top:549px;width:1024px;height:27px;background:linear-gradient(90deg,#1e2f38 0%,#1f2f3e 60%,#1e2d42 100%)"></div>
<svg style="left:10.5px;top:557px" width="12" height="11"><path d="M0 1.6L4.8 1v4.2H0zM5.6 0.9L11.3 0.1v5.1H5.6zM0 6h4.8v4.2L0 9.6zM5.6 6h5.7v5.1L5.6 10.3z" fill="#fff"/></svg>
<div class="a" style="left:32px;top:549px;width:192px;height:27px;background:#f0f0f0"></div>
<svg style="left:39px;top:556px" width="13" height="13"><circle cx="7.6" cy="5.2" r="4" fill="none" stroke="#222" stroke-width="1.1"/><path d="M4.7 8.1L1 11.8" stroke="#222" stroke-width="1.3"/></svg>
<div class="t" style="left:58.6px;top:557.5px;font-size:10.6px;color:#333">Поиск</div>
<!-- search deco -->
<div class="a" style="left:172px;top:568px;width:52px;height:8px;background:#e8c89a;clip-path:polygon(8% 0,92% 0,100% 100%,0 100%)"></div>
<svg style="left:178px;top:553px" width="26" height="17"><path d="M2 6l10 3 10-4 0.8 8.5-10.5 3.5L2.8 14z" fill="#4aa04a"/><path d="M3 5.5l9 3 9.5-4-0.5 7.5-9 3.5-8.5-2.8z" fill="#f2f2fa"/><path d="M12 8.5v7" stroke="#c8c8d8" stroke-width="0.6"/><path d="M16 9l6-7 1.8 1.5-6 7-2.3 0.8z" fill="#f2b33a"/><path d="M22 2l1.8 1.5 0.9-2.3z" fill="#e8483a"/></svg>
<svg style="left:203px;top:550px" width="15" height="21"><path d="M7.5 1c-4 0-6.5 3-6.5 7v9.5c0 1.5 1 2.5 2.5 2.5h8c1.5 0 2.5-1 2.5-2.5V8c0-4-2.5-7-6.5-7z" fill="#2a7de0"/><path d="M1 12c2 2 11 2 13 0v5c-2 2-11 2-13 0z" fill="#1f5fb8"/><rect x="5" y="0" width="5" height="2.5" rx="1" fill="#1f5fb8"/></svg>
<!-- task view -->
<svg style="left:233px;top:556px" width="15" height="13"><rect x="3" y="2.5" width="8.5" height="8" fill="none" stroke="#d0d0d0" stroke-width="1.1"/><path d="M1 1.5v10M13.5 1.5v10M3 0.8h8.5" stroke="#d0d0d0" stroke-width="1"/></svg>
<!-- edge -->
<svg style="left:265px;top:554px" width="18" height="18"><circle cx="9" cy="9" r="8" fill="#1a8fd8"/><path d="M2 10c0-5 4-8 8-8 4 0 7 2.5 7 6 0 1.5-1 2.5-3 2.5H7c0 2 2 3.5 4.5 3.5" fill="#3fd07a" opacity="0.8"/><rect x="2" y="10" width="8" height="7" rx="1" fill="#d98a2a"/></svg>
<!-- skype -->
<svg style="left:299px;top:554px" width="17" height="18"><circle cx="8.5" cy="9" r="8" fill="#1aa0e8"/><text x="8.5" y="13.2" font-family="Liberation Sans" font-weight="bold" font-size="11" fill="#fff" text-anchor="middle">S</text></svg>
<!-- store -->
<svg style="left:332px;top:554px" width="17" height="18"><path d="M1.5 4.5h14v11.5c0 0.8-0.6 1.4-1.4 1.4H2.9c-0.8 0-1.4-0.6-1.4-1.4z" fill="#f4f4f4"/><path d="M5.5 4.5V3a3 3 0 0 1 6 0v1.5" fill="none" stroke="#3a8ad8" stroke-width="1.2"/><rect x="5.5" y="7.5" width="2.7" height="2.7" fill="#f25022"/><rect x="8.8" y="7.5" width="2.7" height="2.7" fill="#7fba00"/><rect x="5.5" y="10.8" width="2.7" height="2.7" fill="#00a4ef"/><rect x="8.8" y="10.8" width="2.7" height="2.7" fill="#ffb900"/></svg>
<!-- mail -->
<svg style="left:364px;top:555px" width="18" height="15"><path d="M1 4.5L9 0.5l8 4V14H1z" fill="#1f7ed0"/><path d="M1 6l8 5 8-5v8H1z" fill="#4aa8ee"/><path d="M3 3.5l6-2.5 6 2.5v2L9 9 3 5.5z" fill="#e8f2fc"/></svg>
<!-- explorer -->
<svg style="left:397px;top:555px" width="18" height="15"><path d="M1 1.5h6l1.5 2H17V14H1z" fill="#e8a826"/><rect x="1" y="5" width="16" height="9" fill="#fcd25a"/><rect x="6" y="9" width="6" height="4" fill="#3a8ad8"/></svg>
<!-- chrome -->
<svg style="left:431px;top:554px" width="18" height="18"><circle cx="9" cy="9" r="8.3" fill="#de4a3a"/><path d="M9 9L2.2 4.8A8.3 8.3 0 0 0 6 16.7z" fill="#2ea44f"/><path d="M9 9L6 16.7A8.3 8.3 0 0 0 17.3 8.5H9z" fill="#fcc934"/><path d="M9 9h8.3" stroke="#fcc934"/><circle cx="9" cy="9" r="3.9" fill="#fff"/><circle cx="9" cy="9" r="3" fill="#3a7ee8"/></svg>
<!-- teams -->
<div class="a" style="left:456.3px;top:549px;width:31.5px;height:27px;background:#3e4b53"></div>
<svg style="left:463px;top:554px" width="20" height="19"><circle cx="13.5" cy="3.8" r="2.4" fill="#7b83eb"/><rect x="10" y="6.5" width="7.5" height="7" rx="2" fill="#7b83eb"/><circle cx="8.5" cy="3" r="2.6" fill="#5b5fc7"/><rect x="1" y="4.5" width="10" height="10" rx="1.2" fill="#4b53bc"/><text x="6" y="12.6" font-family="Liberation Sans" font-weight="bold" font-size="8" fill="#fff" text-anchor="middle">T</text><circle cx="13.8" cy="13.5" r="4.6" fill="#c42b1c"/><text x="13.8" y="16.3" font-family="Liberation Sans" font-weight="bold" font-size="7" fill="#fff" text-anchor="middle">1</text></svg>
<!-- word -->
<svg style="left:497px;top:555px" width="18" height="16"><rect x="4" y="0.5" width="13.5" height="15" rx="1.2" fill="#2b7cd3"/><rect x="4" y="5" width="13.5" height="5" fill="#41a5ee" opacity="0.6"/><rect x="0.5" y="3.5" width="9" height="9" rx="1" fill="#185abd"/><text x="5" y="10.9" font-family="Liberation Sans" font-weight="bold" font-size="7.5" fill="#fff" text-anchor="middle">W</text></svg>
<!-- excel -->
<svg style="left:530px;top:555px" width="18" height="16"><rect x="4" y="0.5" width="13.5" height="15" rx="1.2" fill="#21a366"/><rect x="4" y="5" width="13.5" height="5" fill="#33c481" opacity="0.5"/><rect x="0.5" y="3.5" width="9" height="9" rx="1" fill="#107c41"/><text x="5" y="10.9" font-family="Liberation Sans" font-weight="bold" font-size="7.5" fill="#fff" text-anchor="middle">X</text></svg>
<!-- powerpoint -->
<svg style="left:563px;top:554px" width="18" height="18"><circle cx="10" cy="9" r="7.8" fill="#ed6c47"/><path d="M10 1.2A7.8 7.8 0 0 1 17.8 9H10z" fill="#ff8f6b"/><rect x="0.5" y="4.5" width="9" height="9" rx="1" fill="#c43e1c"/><text x="5" y="11.9" font-family="Liberation Sans" font-weight="bold" font-size="7.5" fill="#fff" text-anchor="middle">P</text></svg>
<!-- viber -->
<svg style="left:596px;top:553px" width="20" height="20"><path d="M8.5 1C4 1 1.5 3.5 1.5 8c0 3 1 5 3 6v3l2.5-2.3c0.5 0.1 1 0.1 1.5 0.1 4.5 0 7-2.5 7-6.8S13 1 8.5 1z" fill="#7d52c7" stroke="#ede8f8" stroke-width="1"/><path d="M6 5c1 2 2.5 4 5 5.5" stroke="#fff" stroke-width="1.2" fill="none"/><rect x="8" y="10" width="11" height="9" rx="2.5" fill="#e23a3a"/><text x="13.5" y="17.3" font-family="Liberation Sans" font-size="7" fill="#fff" text-anchor="middle">56</text></svg>
<!-- acrobat -->
<svg style="left:629px;top:554px" width="17" height="17"><rect x="0.5" y="0.5" width="16" height="16" rx="2" fill="#b30b00"/><path d="M3.5 12.5C6 8 8 5 8.5 3.5c0.5 2 2 5.5 5 8-3-0.8-6-0.5-10 1z" fill="none" stroke="#fff" stroke-width="1.1"/></svg>
<!-- taskbar indicators -->
<div class="a" style="left:392.8px;top:574px;width:27px;height:2px;background:#76b4e4"></div>
<div class="a" style="left:426.0px;top:574px;width:27px;height:2px;background:#76b4e4"></div>
<div class="a" style="left:459.0px;top:574px;width:27px;height:2px;background:#76b4e4"></div>
<div class="a" style="left:492.2px;top:574px;width:27px;height:2px;background:#76b4e4"></div>
<div class="a" style="left:525.0px;top:574px;width:27px;height:2px;background:#76b4e4"></div>
<div class="a" style="left:558.0px;top:574px;width:27px;height:2px;background:#76b4e4"></div>
<div class="a" style="left:591.5px;top:574px;width:27px;height:2px;background:#76b4e4"></div>
<div class="a" style="left:624.5px;top:574px;width:27px;height:2px;background:#76b4e4"></div>
<!-- weather -->
<svg style="left:738px;top:553px" width="18" height="18"><circle cx="8" cy="9.5" r="7" fill="#f5a623"/><path d="M6 16c-2 0-3-1-3-2.3S4 11.5 6 11.5c0.5-1.5 2-2.5 3.5-2.5 2 0 3.5 1.3 3.7 3 1.5 0 2.5 1 2.5 2s-1 2-2.5 2z" fill="#cfe2f4"/><circle cx="13" cy="4.5" r="4" fill="#d93025"/><text x="13" y="7" font-family="Liberation Sans" font-size="6" fill="#fff" text-anchor="middle">1</text></svg>
<div class="t" style="left:760.6px;top:557.5px;font-size:10.2px;color:#f0f0f0;transform-origin:0 0;transform:scaleX(0.93)">25°C&nbsp; Mostly sunny</div>
<svg style="left:858px;top:559px" width="10" height="6"><path d="M0.8 5.2L5 1l4.2 4.2" fill="none" stroke="#e0e0e0" stroke-width="1"/></svg>
<svg style="left:875px;top:555px" width="8" height="14"><rect x="1.5" y="0.5" width="5" height="9" rx="1.2" fill="#e8e8e8"/><rect x="0.5" y="9.5" width="7" height="3.5" rx="1.5" fill="#9a9a9a"/></svg>
<svg style="left:886px;top:558px" width="16" height="9"><rect x="3" y="1" width="11" height="7" rx="0.8" fill="none" stroke="#e0e0e0" stroke-width="1"/><rect x="4.5" y="2.5" width="8" height="4" fill="#e0e0e0"/><path d="M0.5 2.5h2M0.5 6.5h2" stroke="#e0e0e0"/></svg>
<svg style="left:904px;top:556px" width="14" height="13"><path d="M1 4.5h2.5L7 1.5v10L3.5 8.5H1z" fill="none" stroke="#e0e0e0" stroke-width="1"/><path d="M9 4.5c0.8 1 0.8 3 0 4M11 3c1.5 2 1.5 5 0 7" fill="none" stroke="#e0e0e0" stroke-width="0.9"/></svg>
<div class="t" style="left:923.8px;top:559px;font-size:8.5px;color:#f0f0f0;transform-origin:0 0;transform:scaleX(0.86)">УКР</div>
<div class="t" style="left:965.7px;top:552px;font-size:8.5px;color:#f0f0f0;transform:translateX(-50%) scaleX(0.9)">17:19</div>
<div class="t" style="left:965.7px;top:564.5px;font-size:8.5px;color:#f0f0f0;transform:translateX(-50%) scaleX(0.89)">05.06.2024</div>
<svg style="left:995px;top:554px" width="18" height="19"><path d="M1 1h13v10H6l-3 3v-3H1z" fill="none" stroke="#e8e8e8" stroke-width="1.1"/><path d="M3.5 4h8M3.5 6.5h8" stroke="#e8e8e8" stroke-width="0.9"/><circle cx="11.5" cy="13" r="5" fill="#2a2a2a" stroke="#cfcfcf" stroke-width="0.8"/><text x="11.5" y="15.8" font-family="Liberation Sans" font-size="7.5" fill="#fff" text-anchor="middle">2</text></svg>
</body></html>
